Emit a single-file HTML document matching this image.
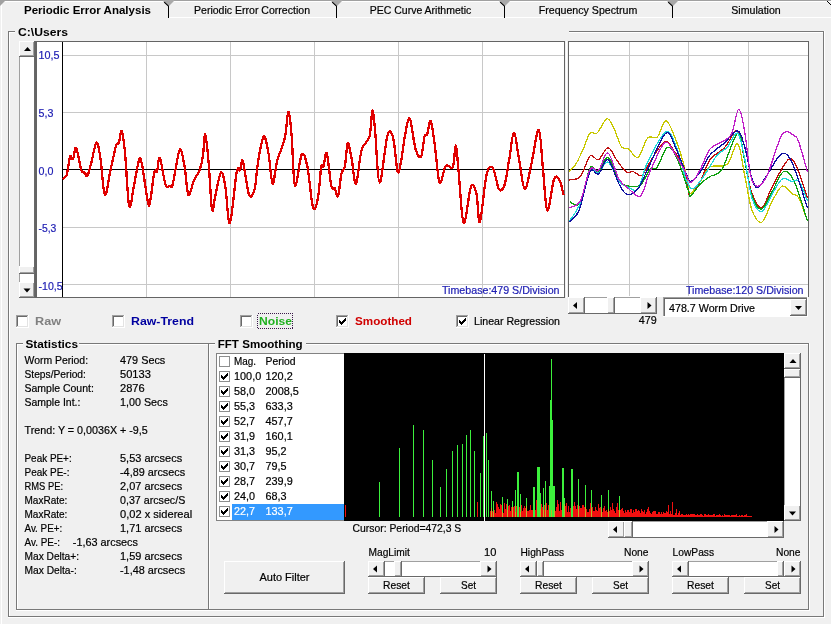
<!DOCTYPE html>
<html><head><meta charset="utf-8"><style>
html,body{margin:0;padding:0;background:#F0F0F0;width:831px;height:624px;overflow:hidden}
svg{display:block;will-change:transform}
text{font-family:"Liberation Sans",sans-serif;white-space:pre;stroke-width:0.2px}
</style></head><body>
<svg width="831" height="624" viewBox="0 0 831 624" shape-rendering="crispEdges">
<rect x="0" y="0" width="831" height="624" fill="#F0F0F0"/>
<rect x="0" y="0" width="831" height="1" fill="#A0A0A0"/>
<rect x="2" y="1" width="829" height="1" fill="#FFFFFF"/>
<rect x="1" y="2" width="1" height="622" fill="#FFFFFF"/>
<polygon points="0,0 6,0 0,6" fill="#A0A0A0" shape-rendering="geometricPrecision"/>
<rect x="169" y="17" width="662" height="1" fill="#FFFFFF"/>
<polygon points="163,0 174,0 174,1 169,6 168,6 163,1" fill="#A8A8A8" shape-rendering="geometricPrecision"/>
<line x1="164.2" y1="2.2" x2="168.5" y2="6.2" stroke="#000" stroke-width="1.1" shape-rendering="geometricPrecision"/>
<rect x="168" y="6" width="1" height="12" fill="#000"/>
<polygon points="331,0 342,0 342,1 337,6 336,6 331,1" fill="#A8A8A8" shape-rendering="geometricPrecision"/>
<line x1="332.2" y1="2.2" x2="336.5" y2="6.2" stroke="#000" stroke-width="1.1" shape-rendering="geometricPrecision"/>
<rect x="336" y="6" width="1" height="12" fill="#000"/>
<polygon points="499,0 510,0 510,1 505,6 504,6 499,1" fill="#A8A8A8" shape-rendering="geometricPrecision"/>
<line x1="500.2" y1="2.2" x2="504.5" y2="6.2" stroke="#000" stroke-width="1.1" shape-rendering="geometricPrecision"/>
<rect x="504" y="6" width="1" height="12" fill="#000"/>
<polygon points="667,0 678,0 678,1 673,6 672,6 667,1" fill="#A8A8A8" shape-rendering="geometricPrecision"/>
<line x1="668.2" y1="2.2" x2="672.5" y2="6.2" stroke="#000" stroke-width="1.1" shape-rendering="geometricPrecision"/>
<rect x="672" y="6" width="1" height="12" fill="#000"/>
<polyline points="827,1 831,5" stroke="#000" stroke-width="1" fill="none" shape-rendering="geometricPrecision"/>
<text x="24" y="14" font-size="11" font-weight="bold" fill="#000" text-anchor="start" textLength="127" lengthAdjust="spacingAndGlyphs">Periodic Error Analysis</text>
<text x="252" y="14" font-size="11" font-weight="normal" fill="#000" stroke="#000" text-anchor="middle" textLength="116" lengthAdjust="spacingAndGlyphs">Periodic Error Correction</text>
<text x="420.5" y="14" font-size="11" font-weight="normal" fill="#000" stroke="#000" text-anchor="middle" textLength="101.5" lengthAdjust="spacingAndGlyphs">PEC Curve Arithmetic</text>
<text x="588" y="14" font-size="11" font-weight="normal" fill="#000" stroke="#000" text-anchor="middle" textLength="98.5" lengthAdjust="spacingAndGlyphs">Frequency Spectrum</text>
<text x="756" y="14" font-size="11" font-weight="normal" fill="#000" stroke="#000" text-anchor="middle" textLength="49.5" lengthAdjust="spacingAndGlyphs">Simulation</text>
<rect x="8" y="31" width="816" height="1" fill="#787878"/>
<rect x="9" y="32" width="814" height="1" fill="#FFFFFF"/>
<rect x="8" y="31" width="1" height="586" fill="#787878"/>
<rect x="9" y="32" width="1" height="584" fill="#FFFFFF"/>
<rect x="823" y="31" width="1" height="586" fill="#787878"/>
<rect x="824" y="31" width="1" height="587" fill="#FFFFFF"/>
<rect x="8" y="616" width="816" height="1" fill="#787878"/>
<rect x="8" y="617" width="817" height="1" fill="#FFFFFF"/>
<rect x="15" y="30" width="554" height="3" fill="#F0F0F0"/>
<text x="18" y="36" font-size="11" font-weight="bold" fill="#000" text-anchor="start" textLength="50" lengthAdjust="spacingAndGlyphs">C:\Users</text>
<rect x="35" y="41" width="530" height="256" fill="#FFFFFF"/>
<rect x="35" y="41" width="530" height="1" fill="#646464"/>
<rect x="35" y="41" width="1" height="257" fill="#646464"/>
<rect x="36" y="41" width="1" height="257" fill="#646464"/>
<rect x="564" y="41" width="1" height="257" fill="#646464"/>
<rect x="35" y="297" width="530" height="1" fill="#646464"/>
<rect x="566" y="41" width="1" height="257" fill="#FFFFFF"/>
<rect x="146" y="42" width="1" height="255" fill="#C8C8C8"/>
<rect x="230" y="42" width="1" height="255" fill="#C8C8C8"/>
<rect x="314" y="42" width="1" height="255" fill="#C8C8C8"/>
<rect x="398" y="42" width="1" height="255" fill="#C8C8C8"/>
<rect x="482" y="42" width="1" height="255" fill="#C8C8C8"/>
<rect x="63" y="55" width="501" height="1" fill="#C8C8C8"/>
<rect x="63" y="112" width="501" height="1" fill="#C8C8C8"/>
<rect x="63" y="227" width="501" height="1" fill="#C8C8C8"/>
<rect x="63" y="284" width="501" height="1" fill="#C8C8C8"/>
<rect x="62" y="42" width="1" height="255" fill="#000"/>
<rect x="62" y="169" width="502" height="1" fill="#000"/>
<text x="38.5" y="59" font-size="11" font-weight="normal" fill="#2020B4" stroke="#2020B4" text-anchor="start" textLength="21.04" lengthAdjust="spacingAndGlyphs">10,5</text>
<text x="38.5" y="117" font-size="11" font-weight="normal" fill="#2020B4" stroke="#2020B4" text-anchor="start" textLength="14.86" lengthAdjust="spacingAndGlyphs">5,3</text>
<text x="38.5" y="174.5" font-size="11" font-weight="normal" fill="#2020B4" stroke="#2020B4" text-anchor="start" textLength="14.86" lengthAdjust="spacingAndGlyphs">0,0</text>
<text x="38.5" y="232" font-size="11" font-weight="normal" fill="#2020B4" stroke="#2020B4" text-anchor="start" textLength="17.87" lengthAdjust="spacingAndGlyphs">-5,3</text>
<text x="38.5" y="290" font-size="11" font-weight="normal" fill="#2020B4" stroke="#2020B4" text-anchor="start" textLength="24.04" lengthAdjust="spacingAndGlyphs">-10,5</text>
<text x="559.5" y="294" font-size="11" font-weight="normal" fill="#2020B4" stroke="#2020B4" text-anchor="end" textLength="117.5" lengthAdjust="spacingAndGlyphs">Timebase:479 S/Division</text>
<path d="M62.7,179.2 C63.4,178.4 65.5,178.4 66.7,174.7 C67.9,170.9 69.0,159.3 70.1,156.7 C71.1,154.1 72.0,160.5 73.0,159.0 C74.0,157.5 74.8,145.9 76.2,147.8 C77.6,149.7 79.9,166.1 81.3,170.2 C82.7,174.3 83.7,171.6 84.7,172.5 C85.7,173.4 86.3,177.5 87.4,175.8 C88.5,174.1 89.9,167.9 91.4,162.4 C92.9,156.9 94.9,143.3 96.4,142.6 C97.9,141.8 99.0,149.2 100.4,157.9 C101.8,166.6 103.2,192.9 104.9,194.9 C106.6,196.9 108.6,178.4 110.5,170.2 C112.4,162.0 114.7,150.0 116.1,145.5 C117.5,141.0 117.9,145.7 118.8,143.3 C119.7,140.9 120.7,129.2 121.7,130.9 C122.8,132.6 123.8,140.9 125.1,153.4 C126.3,165.9 127.7,200.9 129.2,206.1 C130.7,211.3 132.5,192.5 134.1,184.8 C135.7,177.1 137.7,163.5 139.0,160.1 C140.3,156.7 140.5,157.5 142.0,164.6 C143.5,171.7 146.6,196.8 148.0,202.8 C149.4,208.8 149.2,205.6 150.3,200.5 C151.4,195.4 153.2,177.4 154.3,172.5 C155.4,167.6 156.1,173.7 157.0,171.3 C157.9,168.9 158.5,155.7 159.9,157.9 C161.3,160.2 163.9,180.1 165.5,184.8 C167.1,189.5 168.5,185.7 169.6,185.9 C170.7,186.1 171.3,188.7 172.3,185.9 C173.3,183.1 174.3,175.3 175.6,169.1 C176.9,162.9 178.6,149.3 180.1,148.9 C181.6,148.5 183.2,159.1 184.6,166.8 C186.0,174.5 186.8,192.7 188.4,194.9 C190.0,197.2 192.1,184.4 194.0,180.3 C195.9,176.2 198.1,174.3 199.6,170.2 C201.1,166.1 202.1,161.6 203.0,155.6 C203.9,149.6 204.3,133.2 205.2,134.3 C206.1,135.4 207.5,149.9 208.6,162.4 C209.7,174.9 210.9,203.9 212.0,209.5 C213.1,215.1 213.8,202.2 215.3,196.0 C216.8,189.8 219.2,174.0 220.9,172.5 C222.6,171.0 223.9,178.6 225.4,187.0 C226.9,195.4 228.0,225.4 229.9,223.0 C231.8,220.6 234.9,181.3 236.6,172.5 C238.3,163.7 238.9,172.1 240.0,170.2 C241.1,168.3 241.4,157.1 242.9,161.2 C244.4,165.3 247.1,190.2 249.0,194.9 C250.9,199.6 253.1,194.7 254.6,189.3 C256.1,183.9 256.5,171.2 258.0,162.4 C259.5,153.6 261.9,138.0 263.6,136.5 C265.4,135.0 267.0,145.5 268.5,153.4 C270.0,161.3 271.2,182.4 272.6,183.7 C274.0,185.0 275.1,168.9 277.1,161.2 C279.2,153.5 283.0,145.9 284.9,137.7 C286.8,129.5 287.2,112.2 288.3,111.8 C289.4,111.4 290.5,123.1 291.6,135.4 C292.7,147.8 293.3,182.7 295.0,185.9 C296.7,189.1 299.6,157.7 301.7,154.5 C303.8,151.3 305.5,158.0 307.4,166.8 C309.3,175.6 311.2,202.1 313.0,207.3 C314.8,212.6 316.5,205.1 317.9,198.3 C319.3,191.6 320.3,172.1 321.2,166.8 C322.1,161.6 322.6,169.0 323.5,166.8 C324.4,164.6 325.5,150.2 326.8,153.4 C328.1,156.6 330.0,180.1 331.3,185.9 C332.6,191.7 333.6,186.5 334.7,188.2 C335.8,189.9 337.0,198.4 338.1,196.0 C339.2,193.6 340.3,178.5 341.4,173.6 C342.5,168.7 343.8,171.9 344.8,166.8 C345.9,161.8 346.6,144.8 347.7,143.3 C348.8,141.8 350.1,151.2 351.5,157.9 C352.9,164.6 354.3,185.0 356.0,183.7 C357.7,182.4 359.4,157.9 361.6,150.0 C363.9,142.1 367.7,143.1 369.5,136.5 C371.3,129.9 371.5,111.6 372.4,110.7 C373.3,109.8 373.9,118.9 375.1,130.9 C376.3,142.9 377.5,181.8 379.6,182.6 C381.7,183.3 385.2,142.9 387.5,135.4 C389.8,127.9 391.4,131.7 393.1,137.7 C394.8,143.7 396.3,167.2 397.6,171.3 C398.9,175.4 399.6,168.8 400.9,162.4 C402.2,156.1 403.9,140.5 405.4,133.2 C406.9,125.9 408.2,116.0 409.9,118.6 C411.6,121.2 413.6,142.6 415.5,148.9 C417.4,155.2 419.6,158.8 421.1,156.7 C422.6,154.6 423.5,140.2 424.5,136.5 C425.5,132.8 426.2,136.9 427.2,134.3 C428.2,131.7 429.4,119.3 430.6,120.8 C431.8,122.3 433.1,133.0 434.6,143.3 C436.1,153.6 437.8,178.7 439.5,182.6 C441.2,186.5 443.6,169.6 445.1,166.8 C446.6,164.0 447.2,165.7 448.5,165.7 C449.8,165.7 451.8,170.2 453.0,166.8 C454.2,163.4 455.0,144.8 455.9,145.5 C456.8,146.2 457.3,158.4 458.6,171.3 C459.9,184.2 461.6,220.4 463.7,223.0 C465.8,225.6 468.8,191.9 470.9,187.0 C473.0,182.1 475.0,188.0 476.5,193.8 C478.0,199.6 478.2,225.1 479.9,221.9 C481.6,218.7 484.4,183.7 486.6,174.7 C488.8,165.7 490.8,165.6 492.9,168.0 C495.0,170.4 497.1,186.5 499.0,189.3 C500.9,192.1 502.9,189.7 504.6,184.8 C506.3,179.9 507.5,168.7 509.1,160.1 C510.7,151.5 512.3,133.2 514.0,133.2 C515.7,133.2 517.4,150.8 519.2,160.1 C521.0,169.4 522.8,188.7 524.8,189.3 C526.8,189.9 529.2,173.4 531.5,163.5 C533.8,153.6 536.8,129.2 538.7,129.8 C540.6,130.4 541.4,153.3 542.8,166.8 C544.2,180.3 545.4,208.5 547.3,210.6 C549.2,212.7 552.0,184.2 554.0,179.2 C556.0,174.1 558.0,177.7 559.6,180.3 C561.2,182.9 562.9,192.5 563.5,194.9" fill="none" stroke="#E00000" stroke-width="2.3" stroke-linejoin="round" shape-rendering="crispEdges"/>
<rect x="19" y="41" width="16" height="257" fill="#FFFFFF"/>
<rect x="19" y="41" width="1" height="257" fill="#A0A0A0"/>
<rect x="34" y="41" width="1" height="257" fill="#696969"/>
<rect x="19" y="41" width="16" height="16" fill="#F0F0F0"/>
<rect x="19" y="41" width="16" height="1" fill="#FFFFFF"/>
<rect x="19" y="41" width="1" height="16" fill="#FFFFFF"/>
<rect x="19" y="56" width="16" height="1" fill="#696969"/>
<rect x="34" y="41" width="1" height="16" fill="#696969"/>
<rect x="20" y="55" width="14" height="1" fill="#A0A0A0"/>
<rect x="33" y="42" width="1" height="14" fill="#A0A0A0"/>
<polygon points="24.0,51 31.0,51 27.5,47" fill="#000" shape-rendering="geometricPrecision"/>
<rect x="19" y="282" width="16" height="16" fill="#F0F0F0"/>
<rect x="19" y="282" width="16" height="1" fill="#FFFFFF"/>
<rect x="19" y="282" width="1" height="16" fill="#FFFFFF"/>
<rect x="19" y="297" width="16" height="1" fill="#696969"/>
<rect x="34" y="282" width="1" height="16" fill="#696969"/>
<rect x="20" y="296" width="14" height="1" fill="#A0A0A0"/>
<rect x="33" y="283" width="1" height="14" fill="#A0A0A0"/>
<polygon points="23.5,288.5 30.5,288.5 27.0,292.5" fill="#000" shape-rendering="geometricPrecision"/>
<rect x="19" y="266" width="16" height="8" fill="#F0F0F0"/>
<rect x="19" y="266" width="16" height="1" fill="#FFFFFF"/>
<rect x="19" y="266" width="1" height="8" fill="#FFFFFF"/>
<rect x="19" y="273" width="16" height="1" fill="#696969"/>
<rect x="34" y="266" width="1" height="8" fill="#696969"/>
<rect x="20" y="272" width="14" height="1" fill="#A0A0A0"/>
<rect x="33" y="267" width="1" height="6" fill="#A0A0A0"/>
<rect x="568" y="41" width="241" height="256" fill="#FFFFFF"/>
<rect x="568" y="41" width="241" height="1" fill="#646464"/>
<rect x="568" y="41" width="1" height="256" fill="#646464"/>
<rect x="808" y="41" width="1" height="256" fill="#646464"/>
<rect x="629" y="42" width="1" height="254" fill="#C8C8C8"/>
<rect x="688" y="42" width="1" height="254" fill="#C8C8C8"/>
<rect x="748" y="42" width="1" height="254" fill="#C8C8C8"/>
<rect x="569" y="55" width="239" height="1" fill="#C8C8C8"/>
<rect x="569" y="112" width="239" height="1" fill="#C8C8C8"/>
<rect x="569" y="227" width="239" height="1" fill="#C8C8C8"/>
<rect x="569" y="284" width="239" height="1" fill="#C8C8C8"/>
<rect x="569" y="169" width="239" height="1" fill="#000"/>
<text x="803.5" y="294" font-size="11" font-weight="normal" fill="#2020B4" stroke="#2020B4" text-anchor="end" textLength="117.5" lengthAdjust="spacingAndGlyphs">Timebase:120 S/Division</text>
<path d="M568.9,171.7 C570.0,170.5 573.3,168.1 575.6,164.5 C577.9,160.9 580.4,155.2 582.8,150.0 C585.2,144.8 587.6,136.2 590.0,133.3 C592.4,130.4 594.5,135.2 597.3,132.8 C600.1,130.4 604.1,119.5 606.9,118.8 C609.7,118.1 611.6,123.9 614.0,128.5 C616.4,133.1 618.9,143.1 621.3,146.5 C623.7,149.9 625.7,147.1 628.5,148.9 C631.3,150.7 634.8,159.1 638.0,157.3 C641.2,155.5 644.5,141.4 647.7,138.0 C650.9,134.6 654.3,139.8 657.3,136.9 C660.3,134.0 663.0,121.0 665.8,120.8 C668.6,120.6 671.2,128.4 674.2,135.7 C677.2,143.0 681.4,155.7 683.8,164.5 C686.2,173.3 687.2,183.8 688.4,188.6 C689.6,193.4 688.8,194.6 690.8,193.4 C692.8,192.2 697.2,185.7 700.4,181.3 C703.6,176.9 705.6,169.8 710.0,167.0 C714.4,164.2 722.3,168.3 726.9,164.5 C731.5,160.7 734.7,142.0 737.7,144.0 C740.7,146.0 742.5,165.5 744.9,176.5 C747.3,187.5 749.2,202.6 752.0,210.2 C754.8,217.8 758.3,223.8 761.7,222.2 C765.1,220.6 769.1,206.6 772.5,200.6 C775.9,194.6 779.0,187.4 782.2,186.2 C785.4,185.0 789.0,191.4 791.8,193.4 C794.6,195.4 796.4,193.6 799.0,198.2 C801.6,202.8 806.0,217.2 807.4,221.0" fill="none" stroke="#C8C800" stroke-width="1.3" shape-rendering="crispEdges"/>
<path d="M569,180 C570.9,179.4 576.9,180.5 580.4,176.5 C583.9,172.5 587.0,158.8 590.0,156.0 C593.0,153.2 595.5,161.1 598.5,159.7 C601.5,158.3 605.0,147.7 608.0,147.7 C611.0,147.7 613.5,155.7 616.5,159.7 C619.5,163.7 623.2,169.7 626.0,171.7 C628.8,173.7 630.7,171.1 633.3,171.7 C635.9,172.3 638.9,176.9 641.7,175.3 C644.5,173.7 646.2,167.6 650.0,162.0 C653.8,156.4 660.6,143.5 664.6,141.7 C668.6,139.9 671.0,147.1 674.2,151.3 C677.4,155.5 681.4,160.4 683.8,167.0 C686.2,173.6 687.2,186.2 688.4,191.0 C689.6,195.8 688.8,197.4 690.8,195.8 C692.8,194.2 697.2,187.3 700.4,181.3 C703.6,175.3 706.0,165.3 710.0,159.7 C714.0,154.1 719.9,152.5 724.5,147.7 C729.1,142.9 734.3,128.5 737.7,130.9 C741.1,133.3 742.5,151.6 744.9,162.0 C747.3,172.4 749.2,185.8 752.0,193.4 C754.8,201.0 758.3,209.0 761.7,207.8 C765.1,206.6 768.1,194.2 772.5,186.2 C776.9,178.2 784.2,162.9 788.2,159.7 C792.2,156.5 793.4,160.6 796.6,167.0 C799.8,173.4 805.6,193.0 807.4,198.2" fill="none" stroke="#C01010" stroke-width="1.3" shape-rendering="crispEdges"/>
<path d="M569.6,201.8 C571.4,202.0 577.0,208.6 580.4,203.0 C583.8,197.4 587.0,173.2 590.0,168.0 C593.0,162.8 595.5,173.5 598.5,171.7 C601.5,169.9 604.6,155.9 608.0,157.3 C611.4,158.7 615.5,175.2 618.9,180.0 C622.3,184.8 624.9,185.2 628.5,186.0 C632.1,186.8 636.9,187.8 640.5,185.0 C644.1,182.2 647.2,172.3 650.0,169.3 C652.8,166.3 654.5,170.6 657.3,167.0 C660.1,163.4 663.8,149.3 667.0,147.7 C670.2,146.1 673.0,150.1 676.6,157.3 C680.2,164.5 686.0,184.6 688.4,191.0 C690.8,197.4 688.8,197.0 690.8,195.8 C692.8,194.6 697.2,187.0 700.4,183.8 C703.6,180.6 706.4,178.9 710.0,176.5 C713.6,174.1 717.4,176.5 722.0,169.3 C726.6,162.1 733.9,134.5 737.7,133.3 C741.5,132.1 742.5,151.6 744.9,162.0 C747.3,172.4 749.2,188.0 752.0,195.8 C754.8,203.6 758.3,209.8 761.7,209.0 C765.1,208.2 768.9,197.2 772.5,191.0 C776.1,184.8 779.8,173.3 783.4,171.7 C787.0,170.1 790.2,173.1 794.2,181.3 C798.2,189.5 805.2,214.4 807.4,221.0" fill="none" stroke="#10A010" stroke-width="1.3" shape-rendering="crispEdges"/>
<path d="M569.6,221 C571.4,218.0 577.0,211.4 580.4,203.0 C583.8,194.6 587.0,175.5 590.0,170.5 C593.0,165.5 595.5,174.4 598.5,173.0 C601.5,171.6 604.6,160.6 608.0,162.0 C611.4,163.4 615.5,177.1 618.9,181.3 C622.3,185.5 625.3,186.2 628.5,187.4 C631.7,188.6 634.8,192.8 638.0,188.6 C641.2,184.4 643.1,171.4 647.7,162.0 C652.3,152.6 661.0,134.4 665.8,132.0 C670.6,129.6 673.2,139.9 676.6,147.7 C680.0,155.5 683.2,172.2 686.0,179.0 C688.8,185.8 690.0,189.4 693.2,188.6 C696.4,187.8 701.2,179.6 705.2,174.0 C709.2,168.4 713.6,159.4 717.2,155.0 C720.8,150.6 723.5,151.3 726.9,147.7 C730.3,144.1 734.7,131.3 737.7,133.3 C740.7,135.3 742.5,148.9 744.9,159.7 C747.3,170.5 749.2,189.6 752.0,198.2 C754.8,206.8 758.3,212.2 761.7,211.4 C765.1,210.6 769.1,198.8 772.5,193.4 C775.9,188.0 779.0,181.0 782.2,179.0 C785.4,177.0 789.0,180.9 791.8,181.3 C794.6,181.7 796.4,178.1 799.0,181.3 C801.6,184.5 806.0,197.4 807.4,200.6" fill="none" stroke="#20D8D8" stroke-width="1.3" shape-rendering="crispEdges"/>
<path d="M569.6,222.2 C571.2,220.2 575.8,218.4 579.2,210.0 C582.6,201.6 586.8,177.7 590.0,171.7 C593.2,165.7 595.5,176.0 598.5,174.0 C601.5,172.0 604.6,158.1 608.0,159.7 C611.4,161.3 615.7,178.0 618.9,183.8 C622.1,189.6 624.1,193.8 627.3,194.6 C630.5,195.4 634.6,192.8 638.0,188.6 C641.4,184.4 643.1,178.5 647.7,169.3 C652.3,160.1 661.0,136.5 665.8,133.3 C670.6,130.1 673.2,143.2 676.6,150.0 C680.0,156.8 683.8,168.8 686.2,174.0 C688.6,179.2 688.4,181.7 690.8,181.3 C693.2,180.9 697.2,176.1 700.4,171.7 C703.6,167.3 706.0,159.8 710.0,155.0 C714.0,150.2 719.9,146.9 724.5,142.9 C729.1,138.9 734.3,130.1 737.7,130.9 C741.1,131.7 742.5,139.7 744.9,147.7 C747.3,155.7 749.8,172.4 752.0,179.0 C754.2,185.6 755.5,188.2 758.1,187.4 C760.7,186.6 763.9,179.5 767.7,174.0 C771.5,168.5 777.0,156.4 781.0,154.4 C785.0,152.4 787.4,153.1 791.8,162.0 C796.2,170.9 804.8,200.2 807.4,207.8" fill="none" stroke="#1010A0" stroke-width="1.3" shape-rendering="crispEdges"/>
<path d="M569.6,207.8 C571.4,206.6 577.0,207.0 580.4,200.6 C583.8,194.2 587.0,174.3 590.0,169.3 C593.0,164.3 595.5,173.2 598.5,170.5 C601.5,167.8 604.6,151.6 608.0,153.0 C611.4,154.4 615.5,173.1 618.9,179.0 C622.3,184.9 624.9,185.8 628.5,188.6 C632.1,191.4 636.9,198.6 640.5,195.8 C644.1,193.0 646.0,180.5 650.0,171.7 C654.0,162.9 660.6,146.1 664.6,142.9 C668.6,139.7 671.0,148.1 674.2,152.5 C677.4,156.9 681.0,164.3 683.8,169.3 C686.6,174.3 688.0,182.5 690.8,182.5 C693.6,182.5 697.2,174.9 700.4,169.3 C703.6,163.7 706.0,153.8 710.0,149.0 C714.0,144.2 720.9,143.1 724.5,140.5 C728.1,137.9 729.3,138.5 731.7,133.3 C734.1,128.1 736.7,109.2 738.9,109.2 C741.1,109.2 742.9,122.1 744.9,133.3 C746.9,144.5 748.7,167.7 750.9,176.5 C753.1,185.3 755.3,186.6 758.1,186.2 C760.9,185.8 763.7,182.6 767.7,174.0 C771.7,165.4 777.8,140.9 782.2,134.5 C786.6,128.1 791.4,134.3 794.2,135.7 C797.0,137.1 796.8,136.9 799.0,142.9 C801.2,148.9 806.0,166.9 807.4,171.7" fill="none" stroke="#C020C8" stroke-width="1.3" shape-rendering="crispEdges"/>
<rect x="568" y="297" width="89" height="17" fill="#FFFFFF"/>
<rect x="568" y="297" width="89" height="1" fill="#A0A0A0"/>
<rect x="568" y="313" width="89" height="1" fill="#696969"/>
<rect x="568" y="297" width="17" height="17" fill="#F0F0F0"/>
<rect x="568" y="297" width="17" height="1" fill="#FFFFFF"/>
<rect x="568" y="297" width="1" height="17" fill="#FFFFFF"/>
<rect x="568" y="313" width="17" height="1" fill="#696969"/>
<rect x="584" y="297" width="1" height="17" fill="#696969"/>
<rect x="569" y="312" width="15" height="1" fill="#A0A0A0"/>
<rect x="583" y="298" width="1" height="15" fill="#A0A0A0"/>
<polygon points="577,302.1 577,309.1 573,305.6" fill="#000" shape-rendering="geometricPrecision"/>
<rect x="640" y="297" width="17" height="17" fill="#F0F0F0"/>
<rect x="640" y="297" width="17" height="1" fill="#FFFFFF"/>
<rect x="640" y="297" width="1" height="17" fill="#FFFFFF"/>
<rect x="640" y="313" width="17" height="1" fill="#696969"/>
<rect x="656" y="297" width="1" height="17" fill="#696969"/>
<rect x="641" y="312" width="15" height="1" fill="#A0A0A0"/>
<rect x="655" y="298" width="1" height="15" fill="#A0A0A0"/>
<polygon points="647.5,302.1 647.5,309.1 651.5,305.6" fill="#000" shape-rendering="geometricPrecision"/>
<rect x="607" y="297" width="8" height="17" fill="#F0F0F0"/>
<rect x="607" y="297" width="8" height="1" fill="#FFFFFF"/>
<rect x="607" y="297" width="1" height="17" fill="#FFFFFF"/>
<rect x="607" y="313" width="8" height="1" fill="#696969"/>
<rect x="614" y="297" width="1" height="17" fill="#696969"/>
<rect x="608" y="312" width="6" height="1" fill="#A0A0A0"/>
<rect x="613" y="298" width="1" height="15" fill="#A0A0A0"/>
<text x="656.7" y="324" font-size="11" font-weight="normal" fill="#000" stroke="#000" text-anchor="end" textLength="18" lengthAdjust="spacingAndGlyphs">479</text>
<rect x="663" y="297" width="145" height="20" fill="#FFFFFF"/>
<rect x="663" y="297" width="145" height="1" fill="#A0A0A0"/>
<rect x="663" y="297" width="1" height="20" fill="#A0A0A0"/>
<rect x="664" y="298" width="143" height="1" fill="#696969"/>
<rect x="664" y="298" width="1" height="18" fill="#696969"/>
<rect x="663" y="316" width="145" height="1" fill="#FFFFFF"/>
<rect x="807" y="297" width="1" height="20" fill="#FFFFFF"/>
<rect x="790" y="299" width="17" height="17" fill="#F0F0F0"/>
<rect x="790" y="299" width="17" height="1" fill="#FFFFFF"/>
<rect x="790" y="299" width="1" height="17" fill="#FFFFFF"/>
<rect x="790" y="315" width="17" height="1" fill="#696969"/>
<rect x="806" y="299" width="1" height="17" fill="#696969"/>
<rect x="791" y="314" width="15" height="1" fill="#A0A0A0"/>
<rect x="805" y="300" width="1" height="15" fill="#A0A0A0"/>
<polygon points="795,306 802,306 798.5,310" fill="#000" shape-rendering="geometricPrecision"/>
<text x="669" y="312" font-size="11" font-weight="normal" fill="#000" stroke="#000" text-anchor="start" textLength="86" lengthAdjust="spacingAndGlyphs">478.7 Worm Drive</text>
<rect x="16" y="315" width="13" height="13" fill="#FFFFFF"/>
<rect x="16" y="315" width="13" height="1" fill="#A0A0A0"/>
<rect x="16" y="315" width="1" height="13" fill="#A0A0A0"/>
<rect x="17" y="316" width="11" height="1" fill="#696969"/>
<rect x="17" y="316" width="1" height="11" fill="#696969"/>
<rect x="16" y="327" width="13" height="1" fill="#FFFFFF"/>
<rect x="28" y="315" width="1" height="13" fill="#FFFFFF"/>
<rect x="17" y="326" width="11" height="1" fill="#E3E3E3"/>
<rect x="27" y="316" width="1" height="11" fill="#E3E3E3"/>
<text x="35" y="325" font-size="11" font-weight="bold" fill="#808080" text-anchor="start" textLength="26" lengthAdjust="spacingAndGlyphs">Raw</text>
<rect x="112" y="315" width="13" height="13" fill="#FFFFFF"/>
<rect x="112" y="315" width="13" height="1" fill="#A0A0A0"/>
<rect x="112" y="315" width="1" height="13" fill="#A0A0A0"/>
<rect x="113" y="316" width="11" height="1" fill="#696969"/>
<rect x="113" y="316" width="1" height="11" fill="#696969"/>
<rect x="112" y="327" width="13" height="1" fill="#FFFFFF"/>
<rect x="124" y="315" width="1" height="13" fill="#FFFFFF"/>
<rect x="113" y="326" width="11" height="1" fill="#E3E3E3"/>
<rect x="123" y="316" width="1" height="11" fill="#E3E3E3"/>
<text x="131" y="325" font-size="11" font-weight="bold" fill="#0000A0" text-anchor="start" textLength="63" lengthAdjust="spacingAndGlyphs">Raw-Trend</text>
<rect x="240" y="315" width="13" height="13" fill="#FFFFFF"/>
<rect x="240" y="315" width="13" height="1" fill="#A0A0A0"/>
<rect x="240" y="315" width="1" height="13" fill="#A0A0A0"/>
<rect x="241" y="316" width="11" height="1" fill="#696969"/>
<rect x="241" y="316" width="1" height="11" fill="#696969"/>
<rect x="240" y="327" width="13" height="1" fill="#FFFFFF"/>
<rect x="252" y="315" width="1" height="13" fill="#FFFFFF"/>
<rect x="241" y="326" width="11" height="1" fill="#E3E3E3"/>
<rect x="251" y="316" width="1" height="11" fill="#E3E3E3"/>
<rect x="257.5" y="313.5" width="35" height="15" fill="none" stroke="#3A1A4A" stroke-width="1" stroke-dasharray="1,1"/>
<text x="259" y="325" font-size="11" font-weight="bold" fill="#20B020" text-anchor="start" textLength="33" lengthAdjust="spacingAndGlyphs">Noise</text>
<rect x="336" y="315" width="13" height="13" fill="#FFFFFF"/>
<rect x="336" y="315" width="13" height="1" fill="#A0A0A0"/>
<rect x="336" y="315" width="1" height="13" fill="#A0A0A0"/>
<rect x="337" y="316" width="11" height="1" fill="#696969"/>
<rect x="337" y="316" width="1" height="11" fill="#696969"/>
<rect x="336" y="327" width="13" height="1" fill="#FFFFFF"/>
<rect x="348" y="315" width="1" height="13" fill="#FFFFFF"/>
<rect x="337" y="326" width="11" height="1" fill="#E3E3E3"/>
<rect x="347" y="316" width="1" height="11" fill="#E3E3E3"/>
<rect x="345" y="318" width="1" height="1" fill="#000"/>
<rect x="344" y="319" width="1" height="1" fill="#000"/>
<rect x="345" y="319" width="1" height="1" fill="#000"/>
<rect x="339" y="320" width="1" height="1" fill="#000"/>
<rect x="343" y="320" width="1" height="1" fill="#000"/>
<rect x="344" y="320" width="1" height="1" fill="#000"/>
<rect x="345" y="320" width="1" height="1" fill="#000"/>
<rect x="339" y="321" width="1" height="1" fill="#000"/>
<rect x="340" y="321" width="1" height="1" fill="#000"/>
<rect x="342" y="321" width="1" height="1" fill="#000"/>
<rect x="343" y="321" width="1" height="1" fill="#000"/>
<rect x="344" y="321" width="1" height="1" fill="#000"/>
<rect x="339" y="322" width="1" height="1" fill="#000"/>
<rect x="340" y="322" width="1" height="1" fill="#000"/>
<rect x="341" y="322" width="1" height="1" fill="#000"/>
<rect x="342" y="322" width="1" height="1" fill="#000"/>
<rect x="343" y="322" width="1" height="1" fill="#000"/>
<rect x="340" y="323" width="1" height="1" fill="#000"/>
<rect x="341" y="323" width="1" height="1" fill="#000"/>
<rect x="342" y="323" width="1" height="1" fill="#000"/>
<rect x="341" y="324" width="1" height="1" fill="#000"/>
<text x="355" y="325" font-size="11" font-weight="bold" fill="#D00000" text-anchor="start" textLength="57" lengthAdjust="spacingAndGlyphs">Smoothed</text>
<rect x="456" y="315" width="13" height="13" fill="#FFFFFF"/>
<rect x="456" y="315" width="13" height="1" fill="#A0A0A0"/>
<rect x="456" y="315" width="1" height="13" fill="#A0A0A0"/>
<rect x="457" y="316" width="11" height="1" fill="#696969"/>
<rect x="457" y="316" width="1" height="11" fill="#696969"/>
<rect x="456" y="327" width="13" height="1" fill="#FFFFFF"/>
<rect x="468" y="315" width="1" height="13" fill="#FFFFFF"/>
<rect x="457" y="326" width="11" height="1" fill="#E3E3E3"/>
<rect x="467" y="316" width="1" height="11" fill="#E3E3E3"/>
<rect x="465" y="318" width="1" height="1" fill="#000"/>
<rect x="464" y="319" width="1" height="1" fill="#000"/>
<rect x="465" y="319" width="1" height="1" fill="#000"/>
<rect x="459" y="320" width="1" height="1" fill="#000"/>
<rect x="463" y="320" width="1" height="1" fill="#000"/>
<rect x="464" y="320" width="1" height="1" fill="#000"/>
<rect x="465" y="320" width="1" height="1" fill="#000"/>
<rect x="459" y="321" width="1" height="1" fill="#000"/>
<rect x="460" y="321" width="1" height="1" fill="#000"/>
<rect x="462" y="321" width="1" height="1" fill="#000"/>
<rect x="463" y="321" width="1" height="1" fill="#000"/>
<rect x="464" y="321" width="1" height="1" fill="#000"/>
<rect x="459" y="322" width="1" height="1" fill="#000"/>
<rect x="460" y="322" width="1" height="1" fill="#000"/>
<rect x="461" y="322" width="1" height="1" fill="#000"/>
<rect x="462" y="322" width="1" height="1" fill="#000"/>
<rect x="463" y="322" width="1" height="1" fill="#000"/>
<rect x="460" y="323" width="1" height="1" fill="#000"/>
<rect x="461" y="323" width="1" height="1" fill="#000"/>
<rect x="462" y="323" width="1" height="1" fill="#000"/>
<rect x="461" y="324" width="1" height="1" fill="#000"/>
<text x="474" y="325" font-size="11" font-weight="normal" fill="#000" stroke="#000" text-anchor="start" textLength="86" lengthAdjust="spacingAndGlyphs">Linear Regression</text>
<rect x="16" y="343" width="193" height="1" fill="#787878"/>
<rect x="17" y="344" width="191" height="1" fill="#FFFFFF"/>
<rect x="16" y="343" width="1" height="267" fill="#787878"/>
<rect x="17" y="344" width="1" height="265" fill="#FFFFFF"/>
<rect x="208" y="343" width="1" height="267" fill="#787878"/>
<rect x="209" y="343" width="1" height="268" fill="#FFFFFF"/>
<rect x="16" y="609" width="193" height="1" fill="#787878"/>
<rect x="16" y="610" width="194" height="1" fill="#FFFFFF"/>
<rect x="23" y="342" width="56" height="3" fill="#F0F0F0"/>
<text x="25.5" y="348" font-size="11" font-weight="bold" fill="#000" text-anchor="start" textLength="52.5" lengthAdjust="spacingAndGlyphs">Statistics</text>
<text x="24.5" y="364" font-size="11" font-weight="normal" fill="#000" stroke="#000" text-anchor="start" textLength="63.54" lengthAdjust="spacingAndGlyphs">Worm Period:</text>
<text x="120" y="364" font-size="11" font-weight="normal" fill="#000" stroke="#000" text-anchor="start" textLength="45.3" lengthAdjust="spacingAndGlyphs">479 Secs</text>
<text x="24.5" y="378" font-size="11" font-weight="normal" fill="#000" stroke="#000" text-anchor="start" textLength="61.39" lengthAdjust="spacingAndGlyphs">Steps/Period:</text>
<text x="120" y="378" font-size="11" font-weight="normal" fill="#000" stroke="#000" text-anchor="start" textLength="30.89" lengthAdjust="spacingAndGlyphs">50133</text>
<text x="24.5" y="392" font-size="11" font-weight="normal" fill="#000" stroke="#000" text-anchor="start" textLength="69.35" lengthAdjust="spacingAndGlyphs">Sample Count:</text>
<text x="120" y="392" font-size="11" font-weight="normal" fill="#000" stroke="#000" text-anchor="start" textLength="24.71" lengthAdjust="spacingAndGlyphs">2876</text>
<text x="24.5" y="406" font-size="11" font-weight="normal" fill="#000" stroke="#000" text-anchor="start" textLength="55.86" lengthAdjust="spacingAndGlyphs">Sample Int.:</text>
<text x="120" y="406" font-size="11" font-weight="normal" fill="#000" stroke="#000" text-anchor="start" textLength="47.81" lengthAdjust="spacingAndGlyphs">1,00 Secs</text>
<text x="24.5" y="434" font-size="11" font-weight="normal" fill="#000" stroke="#000" text-anchor="start" textLength="123.29" lengthAdjust="spacingAndGlyphs">Trend: Y = 0,0036X + -9,5</text>
<text x="24.5" y="462" font-size="11" font-weight="normal" fill="#000" stroke="#000" text-anchor="start" textLength="47.18" lengthAdjust="spacingAndGlyphs">Peak PE+:</text>
<text x="120" y="462" font-size="11" font-weight="normal" fill="#000" stroke="#000" text-anchor="start" textLength="62.15" lengthAdjust="spacingAndGlyphs">5,53 arcsecs</text>
<text x="24.5" y="476" font-size="11" font-weight="normal" fill="#000" stroke="#000" text-anchor="start" textLength="44.91" lengthAdjust="spacingAndGlyphs">Peak PE-:</text>
<text x="120" y="476" font-size="11" font-weight="normal" fill="#000" stroke="#000" text-anchor="start" textLength="65.16" lengthAdjust="spacingAndGlyphs">-4,89 arcsecs</text>
<text x="24.5" y="490" font-size="11" font-weight="normal" fill="#000" stroke="#000" text-anchor="start" textLength="38.56" lengthAdjust="spacingAndGlyphs">RMS PE:</text>
<text x="120" y="490" font-size="11" font-weight="normal" fill="#000" stroke="#000" text-anchor="start" textLength="62.15" lengthAdjust="spacingAndGlyphs">2,07 arcsecs</text>
<text x="24.5" y="504" font-size="11" font-weight="normal" fill="#000" stroke="#000" text-anchor="start" textLength="42.9" lengthAdjust="spacingAndGlyphs">MaxRate:</text>
<text x="120" y="504" font-size="11" font-weight="normal" fill="#000" stroke="#000" text-anchor="start" textLength="65.29" lengthAdjust="spacingAndGlyphs">0,37 arcsec/S</text>
<text x="24.5" y="518" font-size="11" font-weight="normal" fill="#000" stroke="#000" text-anchor="start" textLength="42.9" lengthAdjust="spacingAndGlyphs">MaxRate:</text>
<text x="120" y="518" font-size="11" font-weight="normal" fill="#000" stroke="#000" text-anchor="start" textLength="72.13" lengthAdjust="spacingAndGlyphs">0,02 x sidereal</text>
<text x="24.5" y="532" font-size="11" font-weight="normal" fill="#000" stroke="#000" text-anchor="start" textLength="37.69" lengthAdjust="spacingAndGlyphs">Av. PE+:</text>
<text x="120" y="532" font-size="11" font-weight="normal" fill="#000" stroke="#000" text-anchor="start" textLength="62.15" lengthAdjust="spacingAndGlyphs">1,71 arcsecs</text>
<text x="24.5" y="546" font-size="11" font-weight="normal" fill="#000" stroke="#000" text-anchor="start" textLength="35.43" lengthAdjust="spacingAndGlyphs">Av. PE-:</text>
<text x="24.5" y="560" font-size="11" font-weight="normal" fill="#000" stroke="#000" text-anchor="start" textLength="54.54" lengthAdjust="spacingAndGlyphs">Max Delta+:</text>
<text x="120" y="560" font-size="11" font-weight="normal" fill="#000" stroke="#000" text-anchor="start" textLength="62.15" lengthAdjust="spacingAndGlyphs">1,59 arcsecs</text>
<text x="24.5" y="574" font-size="11" font-weight="normal" fill="#000" stroke="#000" text-anchor="start" textLength="52.27" lengthAdjust="spacingAndGlyphs">Max Delta-:</text>
<text x="120" y="574" font-size="11" font-weight="normal" fill="#000" stroke="#000" text-anchor="start" textLength="65.16" lengthAdjust="spacingAndGlyphs">-1,48 arcsecs</text>
<text x="72.8" y="546" font-size="11" font-weight="normal" fill="#000" stroke="#000" text-anchor="start" textLength="65.16" lengthAdjust="spacingAndGlyphs">-1,63 arcsecs</text>
<rect x="208" y="343" width="601" height="1" fill="#787878"/>
<rect x="209" y="344" width="599" height="1" fill="#FFFFFF"/>
<rect x="208" y="343" width="1" height="267" fill="#787878"/>
<rect x="209" y="344" width="1" height="265" fill="#FFFFFF"/>
<rect x="808" y="343" width="1" height="267" fill="#787878"/>
<rect x="809" y="343" width="1" height="268" fill="#FFFFFF"/>
<rect x="208" y="609" width="601" height="1" fill="#787878"/>
<rect x="208" y="610" width="602" height="1" fill="#FFFFFF"/>
<rect x="215" y="342" width="91" height="3" fill="#F0F0F0"/>
<text x="217.7" y="348" font-size="11" font-weight="bold" fill="#000" text-anchor="start" textLength="85" lengthAdjust="spacingAndGlyphs">FFT Smoothing</text>
<rect x="216" y="353" width="128" height="168" fill="#FFFFFF"/>
<rect x="216" y="353" width="128" height="1" fill="#828282"/>
<rect x="216" y="353" width="1" height="168" fill="#828282"/>
<rect x="216" y="520" width="128" height="1" fill="#828282"/>
<rect x="219" y="356" width="11" height="11" fill="#FFFFFF"/>
<rect x="219.5" y="356.5" width="10" height="10" fill="none" stroke="#8E8F8F"/>
<text x="234" y="365" font-size="11" font-weight="normal" fill="#000" stroke="#000" text-anchor="start" textLength="22.01" lengthAdjust="spacingAndGlyphs">Mag.</text>
<text x="265.5" y="365" font-size="11" font-weight="normal" fill="#000" stroke="#000" text-anchor="start" textLength="29.99" lengthAdjust="spacingAndGlyphs">Period</text>
<rect x="219" y="371" width="11" height="11" fill="#FFFFFF"/>
<rect x="219.5" y="371.5" width="10" height="10" fill="none" stroke="#8E8F8F"/>
<rect x="227" y="373" width="1" height="1" fill="#000"/>
<rect x="226" y="374" width="1" height="1" fill="#000"/>
<rect x="227" y="374" width="1" height="1" fill="#000"/>
<rect x="221" y="375" width="1" height="1" fill="#000"/>
<rect x="225" y="375" width="1" height="1" fill="#000"/>
<rect x="226" y="375" width="1" height="1" fill="#000"/>
<rect x="227" y="375" width="1" height="1" fill="#000"/>
<rect x="221" y="376" width="1" height="1" fill="#000"/>
<rect x="222" y="376" width="1" height="1" fill="#000"/>
<rect x="224" y="376" width="1" height="1" fill="#000"/>
<rect x="225" y="376" width="1" height="1" fill="#000"/>
<rect x="226" y="376" width="1" height="1" fill="#000"/>
<rect x="221" y="377" width="1" height="1" fill="#000"/>
<rect x="222" y="377" width="1" height="1" fill="#000"/>
<rect x="223" y="377" width="1" height="1" fill="#000"/>
<rect x="224" y="377" width="1" height="1" fill="#000"/>
<rect x="225" y="377" width="1" height="1" fill="#000"/>
<rect x="222" y="378" width="1" height="1" fill="#000"/>
<rect x="223" y="378" width="1" height="1" fill="#000"/>
<rect x="224" y="378" width="1" height="1" fill="#000"/>
<rect x="223" y="379" width="1" height="1" fill="#000"/>
<text x="234" y="380" font-size="11" font-weight="normal" fill="#000" stroke="#000" text-anchor="start" textLength="27.22" lengthAdjust="spacingAndGlyphs">100,0</text>
<text x="265.5" y="380" font-size="11" font-weight="normal" fill="#000" stroke="#000" text-anchor="start" textLength="27.22" lengthAdjust="spacingAndGlyphs">120,2</text>
<rect x="219" y="386" width="11" height="11" fill="#FFFFFF"/>
<rect x="219.5" y="386.5" width="10" height="10" fill="none" stroke="#8E8F8F"/>
<rect x="227" y="388" width="1" height="1" fill="#000"/>
<rect x="226" y="389" width="1" height="1" fill="#000"/>
<rect x="227" y="389" width="1" height="1" fill="#000"/>
<rect x="221" y="390" width="1" height="1" fill="#000"/>
<rect x="225" y="390" width="1" height="1" fill="#000"/>
<rect x="226" y="390" width="1" height="1" fill="#000"/>
<rect x="227" y="390" width="1" height="1" fill="#000"/>
<rect x="221" y="391" width="1" height="1" fill="#000"/>
<rect x="222" y="391" width="1" height="1" fill="#000"/>
<rect x="224" y="391" width="1" height="1" fill="#000"/>
<rect x="225" y="391" width="1" height="1" fill="#000"/>
<rect x="226" y="391" width="1" height="1" fill="#000"/>
<rect x="221" y="392" width="1" height="1" fill="#000"/>
<rect x="222" y="392" width="1" height="1" fill="#000"/>
<rect x="223" y="392" width="1" height="1" fill="#000"/>
<rect x="224" y="392" width="1" height="1" fill="#000"/>
<rect x="225" y="392" width="1" height="1" fill="#000"/>
<rect x="222" y="393" width="1" height="1" fill="#000"/>
<rect x="223" y="393" width="1" height="1" fill="#000"/>
<rect x="224" y="393" width="1" height="1" fill="#000"/>
<rect x="223" y="394" width="1" height="1" fill="#000"/>
<text x="234" y="395" font-size="11" font-weight="normal" fill="#000" stroke="#000" text-anchor="start" textLength="21.04" lengthAdjust="spacingAndGlyphs">58,0</text>
<text x="265.5" y="395" font-size="11" font-weight="normal" fill="#000" stroke="#000" text-anchor="start" textLength="33.4" lengthAdjust="spacingAndGlyphs">2008,5</text>
<rect x="219" y="401" width="11" height="11" fill="#FFFFFF"/>
<rect x="219.5" y="401.5" width="10" height="10" fill="none" stroke="#8E8F8F"/>
<rect x="227" y="403" width="1" height="1" fill="#000"/>
<rect x="226" y="404" width="1" height="1" fill="#000"/>
<rect x="227" y="404" width="1" height="1" fill="#000"/>
<rect x="221" y="405" width="1" height="1" fill="#000"/>
<rect x="225" y="405" width="1" height="1" fill="#000"/>
<rect x="226" y="405" width="1" height="1" fill="#000"/>
<rect x="227" y="405" width="1" height="1" fill="#000"/>
<rect x="221" y="406" width="1" height="1" fill="#000"/>
<rect x="222" y="406" width="1" height="1" fill="#000"/>
<rect x="224" y="406" width="1" height="1" fill="#000"/>
<rect x="225" y="406" width="1" height="1" fill="#000"/>
<rect x="226" y="406" width="1" height="1" fill="#000"/>
<rect x="221" y="407" width="1" height="1" fill="#000"/>
<rect x="222" y="407" width="1" height="1" fill="#000"/>
<rect x="223" y="407" width="1" height="1" fill="#000"/>
<rect x="224" y="407" width="1" height="1" fill="#000"/>
<rect x="225" y="407" width="1" height="1" fill="#000"/>
<rect x="222" y="408" width="1" height="1" fill="#000"/>
<rect x="223" y="408" width="1" height="1" fill="#000"/>
<rect x="224" y="408" width="1" height="1" fill="#000"/>
<rect x="223" y="409" width="1" height="1" fill="#000"/>
<text x="234" y="410" font-size="11" font-weight="normal" fill="#000" stroke="#000" text-anchor="start" textLength="21.04" lengthAdjust="spacingAndGlyphs">55,3</text>
<text x="265.5" y="410" font-size="11" font-weight="normal" fill="#000" stroke="#000" text-anchor="start" textLength="27.22" lengthAdjust="spacingAndGlyphs">633,3</text>
<rect x="219" y="416" width="11" height="11" fill="#FFFFFF"/>
<rect x="219.5" y="416.5" width="10" height="10" fill="none" stroke="#8E8F8F"/>
<rect x="227" y="418" width="1" height="1" fill="#000"/>
<rect x="226" y="419" width="1" height="1" fill="#000"/>
<rect x="227" y="419" width="1" height="1" fill="#000"/>
<rect x="221" y="420" width="1" height="1" fill="#000"/>
<rect x="225" y="420" width="1" height="1" fill="#000"/>
<rect x="226" y="420" width="1" height="1" fill="#000"/>
<rect x="227" y="420" width="1" height="1" fill="#000"/>
<rect x="221" y="421" width="1" height="1" fill="#000"/>
<rect x="222" y="421" width="1" height="1" fill="#000"/>
<rect x="224" y="421" width="1" height="1" fill="#000"/>
<rect x="225" y="421" width="1" height="1" fill="#000"/>
<rect x="226" y="421" width="1" height="1" fill="#000"/>
<rect x="221" y="422" width="1" height="1" fill="#000"/>
<rect x="222" y="422" width="1" height="1" fill="#000"/>
<rect x="223" y="422" width="1" height="1" fill="#000"/>
<rect x="224" y="422" width="1" height="1" fill="#000"/>
<rect x="225" y="422" width="1" height="1" fill="#000"/>
<rect x="222" y="423" width="1" height="1" fill="#000"/>
<rect x="223" y="423" width="1" height="1" fill="#000"/>
<rect x="224" y="423" width="1" height="1" fill="#000"/>
<rect x="223" y="424" width="1" height="1" fill="#000"/>
<text x="234" y="425" font-size="11" font-weight="normal" fill="#000" stroke="#000" text-anchor="start" textLength="21.04" lengthAdjust="spacingAndGlyphs">52,7</text>
<text x="265.5" y="425" font-size="11" font-weight="normal" fill="#000" stroke="#000" text-anchor="start" textLength="27.22" lengthAdjust="spacingAndGlyphs">457,7</text>
<rect x="219" y="431" width="11" height="11" fill="#FFFFFF"/>
<rect x="219.5" y="431.5" width="10" height="10" fill="none" stroke="#8E8F8F"/>
<rect x="227" y="433" width="1" height="1" fill="#000"/>
<rect x="226" y="434" width="1" height="1" fill="#000"/>
<rect x="227" y="434" width="1" height="1" fill="#000"/>
<rect x="221" y="435" width="1" height="1" fill="#000"/>
<rect x="225" y="435" width="1" height="1" fill="#000"/>
<rect x="226" y="435" width="1" height="1" fill="#000"/>
<rect x="227" y="435" width="1" height="1" fill="#000"/>
<rect x="221" y="436" width="1" height="1" fill="#000"/>
<rect x="222" y="436" width="1" height="1" fill="#000"/>
<rect x="224" y="436" width="1" height="1" fill="#000"/>
<rect x="225" y="436" width="1" height="1" fill="#000"/>
<rect x="226" y="436" width="1" height="1" fill="#000"/>
<rect x="221" y="437" width="1" height="1" fill="#000"/>
<rect x="222" y="437" width="1" height="1" fill="#000"/>
<rect x="223" y="437" width="1" height="1" fill="#000"/>
<rect x="224" y="437" width="1" height="1" fill="#000"/>
<rect x="225" y="437" width="1" height="1" fill="#000"/>
<rect x="222" y="438" width="1" height="1" fill="#000"/>
<rect x="223" y="438" width="1" height="1" fill="#000"/>
<rect x="224" y="438" width="1" height="1" fill="#000"/>
<rect x="223" y="439" width="1" height="1" fill="#000"/>
<text x="234" y="440" font-size="11" font-weight="normal" fill="#000" stroke="#000" text-anchor="start" textLength="21.04" lengthAdjust="spacingAndGlyphs">31,9</text>
<text x="265.5" y="440" font-size="11" font-weight="normal" fill="#000" stroke="#000" text-anchor="start" textLength="27.22" lengthAdjust="spacingAndGlyphs">160,1</text>
<rect x="219" y="446" width="11" height="11" fill="#FFFFFF"/>
<rect x="219.5" y="446.5" width="10" height="10" fill="none" stroke="#8E8F8F"/>
<rect x="227" y="448" width="1" height="1" fill="#000"/>
<rect x="226" y="449" width="1" height="1" fill="#000"/>
<rect x="227" y="449" width="1" height="1" fill="#000"/>
<rect x="221" y="450" width="1" height="1" fill="#000"/>
<rect x="225" y="450" width="1" height="1" fill="#000"/>
<rect x="226" y="450" width="1" height="1" fill="#000"/>
<rect x="227" y="450" width="1" height="1" fill="#000"/>
<rect x="221" y="451" width="1" height="1" fill="#000"/>
<rect x="222" y="451" width="1" height="1" fill="#000"/>
<rect x="224" y="451" width="1" height="1" fill="#000"/>
<rect x="225" y="451" width="1" height="1" fill="#000"/>
<rect x="226" y="451" width="1" height="1" fill="#000"/>
<rect x="221" y="452" width="1" height="1" fill="#000"/>
<rect x="222" y="452" width="1" height="1" fill="#000"/>
<rect x="223" y="452" width="1" height="1" fill="#000"/>
<rect x="224" y="452" width="1" height="1" fill="#000"/>
<rect x="225" y="452" width="1" height="1" fill="#000"/>
<rect x="222" y="453" width="1" height="1" fill="#000"/>
<rect x="223" y="453" width="1" height="1" fill="#000"/>
<rect x="224" y="453" width="1" height="1" fill="#000"/>
<rect x="223" y="454" width="1" height="1" fill="#000"/>
<text x="234" y="455" font-size="11" font-weight="normal" fill="#000" stroke="#000" text-anchor="start" textLength="21.04" lengthAdjust="spacingAndGlyphs">31,3</text>
<text x="265.5" y="455" font-size="11" font-weight="normal" fill="#000" stroke="#000" text-anchor="start" textLength="21.04" lengthAdjust="spacingAndGlyphs">95,2</text>
<rect x="219" y="461" width="11" height="11" fill="#FFFFFF"/>
<rect x="219.5" y="461.5" width="10" height="10" fill="none" stroke="#8E8F8F"/>
<rect x="227" y="463" width="1" height="1" fill="#000"/>
<rect x="226" y="464" width="1" height="1" fill="#000"/>
<rect x="227" y="464" width="1" height="1" fill="#000"/>
<rect x="221" y="465" width="1" height="1" fill="#000"/>
<rect x="225" y="465" width="1" height="1" fill="#000"/>
<rect x="226" y="465" width="1" height="1" fill="#000"/>
<rect x="227" y="465" width="1" height="1" fill="#000"/>
<rect x="221" y="466" width="1" height="1" fill="#000"/>
<rect x="222" y="466" width="1" height="1" fill="#000"/>
<rect x="224" y="466" width="1" height="1" fill="#000"/>
<rect x="225" y="466" width="1" height="1" fill="#000"/>
<rect x="226" y="466" width="1" height="1" fill="#000"/>
<rect x="221" y="467" width="1" height="1" fill="#000"/>
<rect x="222" y="467" width="1" height="1" fill="#000"/>
<rect x="223" y="467" width="1" height="1" fill="#000"/>
<rect x="224" y="467" width="1" height="1" fill="#000"/>
<rect x="225" y="467" width="1" height="1" fill="#000"/>
<rect x="222" y="468" width="1" height="1" fill="#000"/>
<rect x="223" y="468" width="1" height="1" fill="#000"/>
<rect x="224" y="468" width="1" height="1" fill="#000"/>
<rect x="223" y="469" width="1" height="1" fill="#000"/>
<text x="234" y="470" font-size="11" font-weight="normal" fill="#000" stroke="#000" text-anchor="start" textLength="21.04" lengthAdjust="spacingAndGlyphs">30,7</text>
<text x="265.5" y="470" font-size="11" font-weight="normal" fill="#000" stroke="#000" text-anchor="start" textLength="21.04" lengthAdjust="spacingAndGlyphs">79,5</text>
<rect x="219" y="476" width="11" height="11" fill="#FFFFFF"/>
<rect x="219.5" y="476.5" width="10" height="10" fill="none" stroke="#8E8F8F"/>
<rect x="227" y="478" width="1" height="1" fill="#000"/>
<rect x="226" y="479" width="1" height="1" fill="#000"/>
<rect x="227" y="479" width="1" height="1" fill="#000"/>
<rect x="221" y="480" width="1" height="1" fill="#000"/>
<rect x="225" y="480" width="1" height="1" fill="#000"/>
<rect x="226" y="480" width="1" height="1" fill="#000"/>
<rect x="227" y="480" width="1" height="1" fill="#000"/>
<rect x="221" y="481" width="1" height="1" fill="#000"/>
<rect x="222" y="481" width="1" height="1" fill="#000"/>
<rect x="224" y="481" width="1" height="1" fill="#000"/>
<rect x="225" y="481" width="1" height="1" fill="#000"/>
<rect x="226" y="481" width="1" height="1" fill="#000"/>
<rect x="221" y="482" width="1" height="1" fill="#000"/>
<rect x="222" y="482" width="1" height="1" fill="#000"/>
<rect x="223" y="482" width="1" height="1" fill="#000"/>
<rect x="224" y="482" width="1" height="1" fill="#000"/>
<rect x="225" y="482" width="1" height="1" fill="#000"/>
<rect x="222" y="483" width="1" height="1" fill="#000"/>
<rect x="223" y="483" width="1" height="1" fill="#000"/>
<rect x="224" y="483" width="1" height="1" fill="#000"/>
<rect x="223" y="484" width="1" height="1" fill="#000"/>
<text x="234" y="485" font-size="11" font-weight="normal" fill="#000" stroke="#000" text-anchor="start" textLength="21.04" lengthAdjust="spacingAndGlyphs">28,7</text>
<text x="265.5" y="485" font-size="11" font-weight="normal" fill="#000" stroke="#000" text-anchor="start" textLength="27.22" lengthAdjust="spacingAndGlyphs">239,9</text>
<rect x="219" y="491" width="11" height="11" fill="#FFFFFF"/>
<rect x="219.5" y="491.5" width="10" height="10" fill="none" stroke="#8E8F8F"/>
<rect x="227" y="493" width="1" height="1" fill="#000"/>
<rect x="226" y="494" width="1" height="1" fill="#000"/>
<rect x="227" y="494" width="1" height="1" fill="#000"/>
<rect x="221" y="495" width="1" height="1" fill="#000"/>
<rect x="225" y="495" width="1" height="1" fill="#000"/>
<rect x="226" y="495" width="1" height="1" fill="#000"/>
<rect x="227" y="495" width="1" height="1" fill="#000"/>
<rect x="221" y="496" width="1" height="1" fill="#000"/>
<rect x="222" y="496" width="1" height="1" fill="#000"/>
<rect x="224" y="496" width="1" height="1" fill="#000"/>
<rect x="225" y="496" width="1" height="1" fill="#000"/>
<rect x="226" y="496" width="1" height="1" fill="#000"/>
<rect x="221" y="497" width="1" height="1" fill="#000"/>
<rect x="222" y="497" width="1" height="1" fill="#000"/>
<rect x="223" y="497" width="1" height="1" fill="#000"/>
<rect x="224" y="497" width="1" height="1" fill="#000"/>
<rect x="225" y="497" width="1" height="1" fill="#000"/>
<rect x="222" y="498" width="1" height="1" fill="#000"/>
<rect x="223" y="498" width="1" height="1" fill="#000"/>
<rect x="224" y="498" width="1" height="1" fill="#000"/>
<rect x="223" y="499" width="1" height="1" fill="#000"/>
<text x="234" y="500" font-size="11" font-weight="normal" fill="#000" stroke="#000" text-anchor="start" textLength="21.04" lengthAdjust="spacingAndGlyphs">24,0</text>
<text x="265.5" y="500" font-size="11" font-weight="normal" fill="#000" stroke="#000" text-anchor="start" textLength="21.04" lengthAdjust="spacingAndGlyphs">68,3</text>
<rect x="232" y="504" width="112" height="16" fill="#3399FF"/>
<rect x="219" y="506" width="11" height="11" fill="#FFFFFF"/>
<rect x="219.5" y="506.5" width="10" height="10" fill="none" stroke="#8E8F8F"/>
<rect x="227" y="508" width="1" height="1" fill="#000"/>
<rect x="226" y="509" width="1" height="1" fill="#000"/>
<rect x="227" y="509" width="1" height="1" fill="#000"/>
<rect x="221" y="510" width="1" height="1" fill="#000"/>
<rect x="225" y="510" width="1" height="1" fill="#000"/>
<rect x="226" y="510" width="1" height="1" fill="#000"/>
<rect x="227" y="510" width="1" height="1" fill="#000"/>
<rect x="221" y="511" width="1" height="1" fill="#000"/>
<rect x="222" y="511" width="1" height="1" fill="#000"/>
<rect x="224" y="511" width="1" height="1" fill="#000"/>
<rect x="225" y="511" width="1" height="1" fill="#000"/>
<rect x="226" y="511" width="1" height="1" fill="#000"/>
<rect x="221" y="512" width="1" height="1" fill="#000"/>
<rect x="222" y="512" width="1" height="1" fill="#000"/>
<rect x="223" y="512" width="1" height="1" fill="#000"/>
<rect x="224" y="512" width="1" height="1" fill="#000"/>
<rect x="225" y="512" width="1" height="1" fill="#000"/>
<rect x="222" y="513" width="1" height="1" fill="#000"/>
<rect x="223" y="513" width="1" height="1" fill="#000"/>
<rect x="224" y="513" width="1" height="1" fill="#000"/>
<rect x="223" y="514" width="1" height="1" fill="#000"/>
<text x="234" y="515" font-size="11" font-weight="normal" fill="#FFFFFF" stroke="#FFFFFF" text-anchor="start" textLength="21.04" lengthAdjust="spacingAndGlyphs">22,7</text>
<text x="265.5" y="515" font-size="11" font-weight="normal" fill="#FFFFFF" stroke="#FFFFFF" text-anchor="start" textLength="27.22" lengthAdjust="spacingAndGlyphs">133,7</text>
<rect x="344" y="353" width="440" height="168" fill="#000000"/>
<rect x="490" y="511" width="1" height="6" fill="#F01010"/>
<rect x="491" y="508" width="1" height="9" fill="#F01010"/>
<rect x="492" y="511" width="1" height="6" fill="#F01010"/>
<rect x="493" y="512" width="1" height="5" fill="#F01010"/>
<rect x="494" y="510" width="1" height="7" fill="#F01010"/>
<rect x="495" y="513" width="1" height="4" fill="#F01010"/>
<rect x="496" y="502" width="1" height="15" fill="#F01010"/>
<rect x="497" y="504" width="1" height="13" fill="#F01010"/>
<rect x="498" y="507" width="1" height="10" fill="#F01010"/>
<rect x="499" y="509" width="1" height="8" fill="#F01010"/>
<rect x="500" y="504" width="1" height="13" fill="#F01010"/>
<rect x="501" y="505" width="1" height="12" fill="#F01010"/>
<rect x="502" y="512" width="1" height="5" fill="#F01010"/>
<rect x="503" y="513" width="1" height="4" fill="#F01010"/>
<rect x="504" y="503" width="1" height="14" fill="#F01010"/>
<rect x="505" y="509" width="1" height="8" fill="#F01010"/>
<rect x="506" y="504" width="1" height="13" fill="#F01010"/>
<rect x="507" y="510" width="1" height="7" fill="#F01010"/>
<rect x="508" y="506" width="1" height="11" fill="#F01010"/>
<rect x="509" y="505" width="1" height="12" fill="#F01010"/>
<rect x="510" y="511" width="1" height="6" fill="#F01010"/>
<rect x="511" y="507" width="1" height="10" fill="#F01010"/>
<rect x="512" y="507" width="1" height="10" fill="#F01010"/>
<rect x="513" y="507" width="1" height="10" fill="#F01010"/>
<rect x="514" y="506" width="1" height="11" fill="#F01010"/>
<rect x="515" y="512" width="1" height="5" fill="#F01010"/>
<rect x="516" y="506" width="1" height="11" fill="#F01010"/>
<rect x="517" y="505" width="1" height="12" fill="#F01010"/>
<rect x="518" y="512" width="1" height="5" fill="#F01010"/>
<rect x="519" y="507" width="1" height="10" fill="#F01010"/>
<rect x="520" y="512" width="1" height="5" fill="#F01010"/>
<rect x="521" y="505" width="1" height="12" fill="#F01010"/>
<rect x="522" y="511" width="1" height="6" fill="#F01010"/>
<rect x="523" y="508" width="1" height="9" fill="#F01010"/>
<rect x="524" y="506" width="1" height="11" fill="#F01010"/>
<rect x="525" y="508" width="1" height="9" fill="#F01010"/>
<rect x="526" y="506" width="1" height="11" fill="#F01010"/>
<rect x="527" y="511" width="1" height="6" fill="#F01010"/>
<rect x="528" y="511" width="1" height="6" fill="#F01010"/>
<rect x="529" y="510" width="1" height="7" fill="#F01010"/>
<rect x="530" y="505" width="1" height="12" fill="#F01010"/>
<rect x="531" y="510" width="1" height="7" fill="#F01010"/>
<rect x="532" y="510" width="1" height="7" fill="#F01010"/>
<rect x="533" y="505" width="1" height="12" fill="#F01010"/>
<rect x="534" y="511" width="1" height="6" fill="#F01010"/>
<rect x="535" y="510" width="1" height="7" fill="#F01010"/>
<rect x="536" y="500" width="1" height="17" fill="#F01010"/>
<rect x="537" y="505" width="1" height="12" fill="#F01010"/>
<rect x="538" y="511" width="1" height="6" fill="#F01010"/>
<rect x="539" y="510" width="1" height="7" fill="#F01010"/>
<rect x="540" y="509" width="1" height="8" fill="#F01010"/>
<rect x="541" y="504" width="1" height="13" fill="#F01010"/>
<rect x="542" y="507" width="1" height="10" fill="#F01010"/>
<rect x="543" y="510" width="1" height="7" fill="#F01010"/>
<rect x="544" y="505" width="1" height="12" fill="#F01010"/>
<rect x="545" y="510" width="1" height="7" fill="#F01010"/>
<rect x="546" y="503" width="1" height="14" fill="#F01010"/>
<rect x="547" y="510" width="1" height="7" fill="#F01010"/>
<rect x="548" y="505" width="1" height="12" fill="#F01010"/>
<rect x="549" y="508" width="1" height="9" fill="#F01010"/>
<rect x="550" y="511" width="1" height="6" fill="#F01010"/>
<rect x="551" y="510" width="1" height="7" fill="#F01010"/>
<rect x="552" y="510" width="1" height="7" fill="#F01010"/>
<rect x="553" y="507" width="1" height="10" fill="#F01010"/>
<rect x="554" y="510" width="1" height="7" fill="#F01010"/>
<rect x="555" y="511" width="1" height="6" fill="#F01010"/>
<rect x="556" y="507" width="1" height="10" fill="#F01010"/>
<rect x="557" y="500" width="1" height="17" fill="#F01010"/>
<rect x="558" y="504" width="1" height="13" fill="#F01010"/>
<rect x="559" y="511" width="1" height="6" fill="#F01010"/>
<rect x="560" y="502" width="1" height="15" fill="#F01010"/>
<rect x="561" y="510" width="1" height="7" fill="#F01010"/>
<rect x="562" y="507" width="1" height="10" fill="#F01010"/>
<rect x="563" y="509" width="1" height="8" fill="#F01010"/>
<rect x="564" y="504" width="1" height="13" fill="#F01010"/>
<rect x="565" y="506" width="1" height="11" fill="#F01010"/>
<rect x="566" y="503" width="1" height="14" fill="#F01010"/>
<rect x="567" y="512" width="1" height="5" fill="#F01010"/>
<rect x="568" y="506" width="1" height="11" fill="#F01010"/>
<rect x="569" y="512" width="1" height="5" fill="#F01010"/>
<rect x="570" y="508" width="1" height="9" fill="#F01010"/>
<rect x="571" y="509" width="1" height="8" fill="#F01010"/>
<rect x="572" y="511" width="1" height="6" fill="#F01010"/>
<rect x="573" y="506" width="1" height="11" fill="#F01010"/>
<rect x="574" y="502" width="1" height="15" fill="#F01010"/>
<rect x="575" y="506" width="1" height="11" fill="#F01010"/>
<rect x="576" y="509" width="1" height="8" fill="#F01010"/>
<rect x="577" y="505" width="1" height="12" fill="#F01010"/>
<rect x="578" y="509" width="1" height="8" fill="#F01010"/>
<rect x="579" y="506" width="1" height="11" fill="#F01010"/>
<rect x="580" y="508" width="1" height="9" fill="#F01010"/>
<rect x="581" y="508" width="1" height="9" fill="#F01010"/>
<rect x="582" y="505" width="1" height="12" fill="#F01010"/>
<rect x="583" y="505" width="1" height="12" fill="#F01010"/>
<rect x="584" y="507" width="1" height="10" fill="#F01010"/>
<rect x="585" y="507" width="1" height="10" fill="#F01010"/>
<rect x="586" y="509" width="1" height="8" fill="#F01010"/>
<rect x="587" y="512" width="1" height="5" fill="#F01010"/>
<rect x="588" y="512" width="1" height="5" fill="#F01010"/>
<rect x="589" y="509" width="1" height="8" fill="#F01010"/>
<rect x="590" y="503" width="1" height="14" fill="#F01010"/>
<rect x="591" y="508" width="1" height="9" fill="#F01010"/>
<rect x="592" y="507" width="1" height="10" fill="#F01010"/>
<rect x="593" y="511" width="1" height="6" fill="#F01010"/>
<rect x="594" y="511" width="1" height="6" fill="#F01010"/>
<rect x="595" y="507" width="1" height="10" fill="#F01010"/>
<rect x="596" y="510" width="1" height="7" fill="#F01010"/>
<rect x="597" y="511" width="1" height="6" fill="#F01010"/>
<rect x="598" y="504" width="1" height="13" fill="#F01010"/>
<rect x="599" y="508" width="1" height="9" fill="#F01010"/>
<rect x="600" y="507" width="1" height="10" fill="#F01010"/>
<rect x="601" y="509" width="1" height="8" fill="#F01010"/>
<rect x="602" y="512" width="1" height="5" fill="#F01010"/>
<rect x="603" y="508" width="1" height="9" fill="#F01010"/>
<rect x="604" y="506" width="1" height="11" fill="#F01010"/>
<rect x="605" y="511" width="1" height="6" fill="#F01010"/>
<rect x="606" y="510" width="1" height="7" fill="#F01010"/>
<rect x="607" y="512" width="1" height="5" fill="#F01010"/>
<rect x="608" y="509" width="1" height="8" fill="#F01010"/>
<rect x="609" y="511" width="1" height="6" fill="#F01010"/>
<rect x="610" y="507" width="1" height="10" fill="#F01010"/>
<rect x="611" y="510" width="1" height="7" fill="#F01010"/>
<rect x="612" y="503" width="1" height="14" fill="#F01010"/>
<rect x="613" y="509" width="1" height="8" fill="#F01010"/>
<rect x="614" y="511" width="1" height="6" fill="#F01010"/>
<rect x="615" y="513" width="1" height="4" fill="#F01010"/>
<rect x="616" y="507" width="1" height="10" fill="#F01010"/>
<rect x="617" y="503" width="1" height="14" fill="#F01010"/>
<rect x="618" y="510" width="1" height="7" fill="#F01010"/>
<rect x="619" y="510" width="1" height="7" fill="#F01010"/>
<rect x="620" y="510" width="1" height="7" fill="#F01010"/>
<rect x="621" y="509" width="1" height="8" fill="#F01010"/>
<rect x="622" y="508" width="1" height="9" fill="#F01010"/>
<rect x="623" y="511" width="1" height="6" fill="#F01010"/>
<rect x="624" y="513" width="1" height="4" fill="#F01010"/>
<rect x="625" y="510" width="1" height="7" fill="#F01010"/>
<rect x="626" y="512" width="1" height="5" fill="#F01010"/>
<rect x="627" y="510" width="1" height="7" fill="#F01010"/>
<rect x="628" y="510" width="1" height="7" fill="#F01010"/>
<rect x="629" y="512" width="1" height="5" fill="#F01010"/>
<rect x="630" y="509" width="1" height="8" fill="#F01010"/>
<rect x="631" y="509" width="1" height="8" fill="#F01010"/>
<rect x="632" y="513" width="1" height="4" fill="#F01010"/>
<rect x="633" y="510" width="1" height="7" fill="#F01010"/>
<rect x="634" y="512" width="1" height="5" fill="#F01010"/>
<rect x="635" y="509" width="1" height="8" fill="#F01010"/>
<rect x="636" y="509" width="1" height="8" fill="#F01010"/>
<rect x="637" y="511" width="1" height="6" fill="#F01010"/>
<rect x="638" y="510" width="1" height="7" fill="#F01010"/>
<rect x="639" y="511" width="1" height="6" fill="#F01010"/>
<rect x="640" y="513" width="1" height="4" fill="#F01010"/>
<rect x="641" y="509" width="1" height="8" fill="#F01010"/>
<rect x="642" y="511" width="1" height="6" fill="#F01010"/>
<rect x="643" y="512" width="1" height="5" fill="#F01010"/>
<rect x="644" y="510" width="1" height="7" fill="#F01010"/>
<rect x="645" y="514" width="1" height="3" fill="#F01010"/>
<rect x="646" y="512" width="1" height="5" fill="#F01010"/>
<rect x="647" y="509" width="1" height="8" fill="#F01010"/>
<rect x="648" y="507" width="1" height="10" fill="#F01010"/>
<rect x="649" y="511" width="1" height="6" fill="#F01010"/>
<rect x="650" y="513" width="1" height="4" fill="#F01010"/>
<rect x="651" y="514" width="1" height="3" fill="#F01010"/>
<rect x="652" y="512" width="1" height="5" fill="#F01010"/>
<rect x="653" y="511" width="1" height="6" fill="#F01010"/>
<rect x="654" y="511" width="1" height="6" fill="#F01010"/>
<rect x="655" y="511" width="1" height="6" fill="#F01010"/>
<rect x="656" y="514" width="1" height="3" fill="#F01010"/>
<rect x="657" y="514" width="1" height="3" fill="#F01010"/>
<rect x="658" y="512" width="1" height="5" fill="#F01010"/>
<rect x="659" y="512" width="1" height="5" fill="#F01010"/>
<rect x="660" y="514" width="1" height="3" fill="#F01010"/>
<rect x="661" y="512" width="1" height="5" fill="#F01010"/>
<rect x="662" y="514" width="1" height="3" fill="#F01010"/>
<rect x="663" y="512" width="1" height="5" fill="#F01010"/>
<rect x="664" y="513" width="1" height="4" fill="#F01010"/>
<rect x="665" y="513" width="1" height="4" fill="#F01010"/>
<rect x="666" y="511" width="1" height="6" fill="#F01010"/>
<rect x="667" y="512" width="1" height="5" fill="#F01010"/>
<rect x="668" y="505" width="1" height="12" fill="#F01010"/>
<rect x="669" y="514" width="1" height="3" fill="#F01010"/>
<rect x="670" y="511" width="1" height="6" fill="#F01010"/>
<rect x="671" y="514" width="1" height="3" fill="#F01010"/>
<rect x="672" y="502" width="1" height="15" fill="#F01010"/>
<rect x="673" y="515" width="1" height="2" fill="#F01010"/>
<rect x="674" y="515" width="1" height="2" fill="#F01010"/>
<rect x="675" y="513" width="1" height="4" fill="#F01010"/>
<rect x="676" y="509" width="1" height="8" fill="#F01010"/>
<rect x="677" y="515" width="1" height="2" fill="#F01010"/>
<rect x="678" y="513" width="1" height="4" fill="#F01010"/>
<rect x="679" y="511" width="1" height="6" fill="#F01010"/>
<rect x="680" y="515" width="1" height="2" fill="#F01010"/>
<rect x="681" y="514" width="1" height="3" fill="#F01010"/>
<rect x="682" y="514" width="1" height="3" fill="#F01010"/>
<rect x="683" y="515" width="1" height="2" fill="#F01010"/>
<rect x="684" y="515" width="1" height="2" fill="#F01010"/>
<rect x="685" y="515" width="1" height="2" fill="#F01010"/>
<rect x="686" y="514" width="1" height="3" fill="#F01010"/>
<rect x="687" y="515" width="1" height="2" fill="#F01010"/>
<rect x="688" y="514" width="1" height="3" fill="#F01010"/>
<rect x="689" y="515" width="1" height="2" fill="#F01010"/>
<rect x="690" y="514" width="1" height="3" fill="#F01010"/>
<rect x="691" y="514" width="1" height="3" fill="#F01010"/>
<rect x="692" y="514" width="1" height="3" fill="#F01010"/>
<rect x="693" y="514" width="1" height="3" fill="#F01010"/>
<rect x="694" y="514" width="1" height="3" fill="#F01010"/>
<rect x="695" y="515" width="1" height="2" fill="#F01010"/>
<rect x="696" y="515" width="1" height="2" fill="#F01010"/>
<rect x="697" y="514" width="1" height="3" fill="#F01010"/>
<rect x="698" y="515" width="1" height="2" fill="#F01010"/>
<rect x="699" y="515" width="1" height="2" fill="#F01010"/>
<rect x="700" y="514" width="1" height="3" fill="#F01010"/>
<rect x="701" y="514" width="1" height="3" fill="#F01010"/>
<rect x="702" y="515" width="1" height="2" fill="#F01010"/>
<rect x="703" y="516" width="1" height="1" fill="#F01010"/>
<rect x="704" y="514" width="1" height="3" fill="#F01010"/>
<rect x="705" y="514" width="1" height="3" fill="#F01010"/>
<rect x="706" y="515" width="1" height="2" fill="#F01010"/>
<rect x="707" y="515" width="1" height="2" fill="#F01010"/>
<rect x="708" y="514" width="1" height="3" fill="#F01010"/>
<rect x="709" y="515" width="1" height="2" fill="#F01010"/>
<rect x="710" y="515" width="1" height="2" fill="#F01010"/>
<rect x="711" y="515" width="1" height="2" fill="#F01010"/>
<rect x="712" y="515" width="1" height="2" fill="#F01010"/>
<rect x="713" y="514" width="1" height="3" fill="#F01010"/>
<rect x="714" y="514" width="1" height="3" fill="#F01010"/>
<rect x="715" y="516" width="1" height="1" fill="#F01010"/>
<rect x="716" y="515" width="1" height="2" fill="#F01010"/>
<rect x="717" y="515" width="1" height="2" fill="#F01010"/>
<rect x="718" y="515" width="1" height="2" fill="#F01010"/>
<rect x="719" y="514" width="1" height="3" fill="#F01010"/>
<rect x="720" y="515" width="1" height="2" fill="#F01010"/>
<rect x="721" y="516" width="1" height="1" fill="#F01010"/>
<rect x="722" y="515" width="1" height="2" fill="#F01010"/>
<rect x="723" y="516" width="1" height="1" fill="#F01010"/>
<rect x="724" y="514" width="1" height="3" fill="#F01010"/>
<rect x="725" y="515" width="1" height="2" fill="#F01010"/>
<rect x="726" y="515" width="1" height="2" fill="#F01010"/>
<rect x="727" y="515" width="1" height="2" fill="#F01010"/>
<rect x="728" y="515" width="1" height="2" fill="#F01010"/>
<rect x="729" y="515" width="1" height="2" fill="#F01010"/>
<rect x="730" y="516" width="1" height="1" fill="#F01010"/>
<rect x="731" y="515" width="1" height="2" fill="#F01010"/>
<rect x="732" y="515" width="1" height="2" fill="#F01010"/>
<rect x="733" y="515" width="1" height="2" fill="#F01010"/>
<rect x="734" y="515" width="1" height="2" fill="#F01010"/>
<rect x="735" y="515" width="1" height="2" fill="#F01010"/>
<rect x="736" y="514" width="1" height="3" fill="#F01010"/>
<rect x="737" y="516" width="1" height="1" fill="#F01010"/>
<rect x="738" y="516" width="1" height="1" fill="#F01010"/>
<rect x="739" y="515" width="1" height="2" fill="#F01010"/>
<rect x="740" y="516" width="1" height="1" fill="#F01010"/>
<rect x="741" y="515" width="1" height="2" fill="#F01010"/>
<rect x="742" y="515" width="1" height="2" fill="#F01010"/>
<rect x="743" y="516" width="1" height="1" fill="#F01010"/>
<rect x="744" y="515" width="1" height="2" fill="#F01010"/>
<rect x="745" y="515" width="1" height="2" fill="#F01010"/>
<rect x="746" y="514" width="1" height="3" fill="#F01010"/>
<rect x="747" y="516" width="1" height="1" fill="#F01010"/>
<rect x="748" y="516" width="1" height="1" fill="#F01010"/>
<rect x="749" y="516" width="1" height="1" fill="#F01010"/>
<rect x="750" y="516" width="1" height="1" fill="#F01010"/>
<rect x="751" y="516" width="1" height="1" fill="#F01010"/>
<rect x="345" y="505" width="1" height="12" fill="#F01010"/>
<rect x="477" y="502" width="1" height="15" fill="#F01010"/>
<rect x="379" y="482" width="1" height="35" fill="#3CF03C"/>
<rect x="399" y="448" width="1" height="69" fill="#3CF03C"/>
<rect x="413" y="425" width="1" height="92" fill="#3CF03C"/>
<rect x="423" y="430" width="1" height="87" fill="#3CF03C"/>
<rect x="432" y="460" width="1" height="57" fill="#3CF03C"/>
<rect x="440" y="487" width="1" height="30" fill="#3CF03C"/>
<rect x="446" y="469" width="1" height="48" fill="#3CF03C"/>
<rect x="452" y="451" width="1" height="66" fill="#3CF03C"/>
<rect x="457" y="445" width="1" height="72" fill="#3CF03C"/>
<rect x="462" y="444" width="1" height="73" fill="#3CF03C"/>
<rect x="466" y="435" width="1" height="82" fill="#3CF03C"/>
<rect x="470" y="430" width="1" height="87" fill="#3CF03C"/>
<rect x="474" y="451" width="1" height="66" fill="#3CF03C"/>
<rect x="480" y="473" width="1" height="44" fill="#3CF03C"/>
<rect x="483" y="436" width="1" height="81" fill="#3CF03C"/>
<rect x="486" y="433" width="1" height="84" fill="#3CF03C"/>
<rect x="488" y="460" width="1" height="57" fill="#3CF03C"/>
<rect x="491" y="491" width="1" height="17" fill="#3CF03C"/>
<rect x="491" y="508" width="1" height="9" fill="#B8B828"/>
<rect x="493" y="501" width="1" height="11" fill="#3CF03C"/>
<rect x="493" y="512" width="1" height="5" fill="#B8B828"/>
<rect x="502" y="497" width="1" height="15" fill="#3CF03C"/>
<rect x="502" y="512" width="1" height="5" fill="#B8B828"/>
<rect x="507" y="499" width="1" height="11" fill="#3CF03C"/>
<rect x="507" y="510" width="1" height="7" fill="#B8B828"/>
<rect x="512" y="501" width="1" height="6" fill="#3CF03C"/>
<rect x="512" y="507" width="1" height="10" fill="#B8B828"/>
<rect x="515" y="490" width="1" height="22" fill="#3CF03C"/>
<rect x="515" y="512" width="1" height="5" fill="#B8B828"/>
<rect x="517" y="472" width="1" height="45" fill="#3CF03C"/>
<rect x="518" y="472" width="1" height="45" fill="#3CF03C"/>
<rect x="520" y="494" width="1" height="18" fill="#3CF03C"/>
<rect x="520" y="512" width="1" height="5" fill="#B8B828"/>
<rect x="526" y="498" width="1" height="8" fill="#3CF03C"/>
<rect x="526" y="506" width="1" height="11" fill="#B8B828"/>
<rect x="533" y="487" width="1" height="30" fill="#3CF03C"/>
<rect x="534" y="487" width="1" height="30" fill="#3CF03C"/>
<rect x="537" y="467" width="1" height="50" fill="#3CF03C"/>
<rect x="538" y="467" width="1" height="50" fill="#3CF03C"/>
<rect x="539" y="467" width="1" height="50" fill="#3CF03C"/>
<rect x="540" y="493" width="1" height="16" fill="#3CF03C"/>
<rect x="540" y="509" width="1" height="8" fill="#B8B828"/>
<rect x="543" y="488" width="1" height="22" fill="#3CF03C"/>
<rect x="543" y="510" width="1" height="7" fill="#B8B828"/>
<rect x="545" y="481" width="1" height="29" fill="#3CF03C"/>
<rect x="545" y="510" width="1" height="7" fill="#B8B828"/>
<rect x="549" y="486" width="1" height="31" fill="#3CF03C"/>
<rect x="550" y="486" width="1" height="31" fill="#3CF03C"/>
<rect x="551" y="486" width="1" height="31" fill="#3CF03C"/>
<rect x="552" y="486" width="1" height="31" fill="#3CF03C"/>
<rect x="553" y="486" width="1" height="31" fill="#3CF03C"/>
<rect x="554" y="486" width="1" height="31" fill="#3CF03C"/>
<rect x="550" y="420" width="1" height="97" fill="#3CF03C"/>
<rect x="551" y="420" width="1" height="97" fill="#3CF03C"/>
<rect x="552" y="420" width="1" height="97" fill="#3CF03C"/>
<rect x="550" y="400" width="1" height="117" fill="#3CF03C"/>
<rect x="551" y="400" width="1" height="117" fill="#3CF03C"/>
<rect x="551" y="359" width="1" height="151" fill="#3CF03C"/>
<rect x="551" y="510" width="1" height="7" fill="#B8B828"/>
<rect x="554" y="487" width="1" height="23" fill="#3CF03C"/>
<rect x="554" y="510" width="1" height="7" fill="#B8B828"/>
<rect x="562" y="468" width="1" height="49" fill="#3CF03C"/>
<rect x="563" y="468" width="1" height="49" fill="#3CF03C"/>
<rect x="564" y="498" width="1" height="6" fill="#3CF03C"/>
<rect x="564" y="504" width="1" height="13" fill="#B8B828"/>
<rect x="571" y="469" width="1" height="48" fill="#3CF03C"/>
<rect x="572" y="469" width="1" height="48" fill="#3CF03C"/>
<rect x="578" y="479" width="1" height="30" fill="#3CF03C"/>
<rect x="578" y="509" width="1" height="8" fill="#B8B828"/>
<rect x="585" y="485" width="1" height="22" fill="#3CF03C"/>
<rect x="585" y="507" width="1" height="10" fill="#B8B828"/>
<rect x="591" y="490" width="1" height="18" fill="#3CF03C"/>
<rect x="591" y="508" width="1" height="9" fill="#B8B828"/>
<rect x="601" y="495" width="1" height="14" fill="#3CF03C"/>
<rect x="601" y="509" width="1" height="8" fill="#B8B828"/>
<rect x="608" y="490" width="1" height="19" fill="#3CF03C"/>
<rect x="608" y="509" width="1" height="8" fill="#B8B828"/>
<rect x="619" y="496" width="1" height="14" fill="#3CF03C"/>
<rect x="619" y="510" width="1" height="7" fill="#B8B828"/>
<rect x="484" y="354" width="1" height="167" fill="#FFFFFF"/>
<rect x="784" y="353" width="17" height="168" fill="#FFFFFF"/>
<rect x="784" y="353" width="1" height="168" fill="#A0A0A0"/>
<rect x="800" y="353" width="1" height="168" fill="#696969"/>
<rect x="784" y="353" width="17" height="16" fill="#F0F0F0"/>
<rect x="784" y="353" width="17" height="1" fill="#FFFFFF"/>
<rect x="784" y="353" width="1" height="16" fill="#FFFFFF"/>
<rect x="784" y="368" width="17" height="1" fill="#696969"/>
<rect x="800" y="353" width="1" height="16" fill="#696969"/>
<rect x="785" y="367" width="15" height="1" fill="#A0A0A0"/>
<rect x="799" y="354" width="1" height="14" fill="#A0A0A0"/>
<polygon points="789.5,363 796.5,363 793.0,359" fill="#000" shape-rendering="geometricPrecision"/>
<rect x="784" y="505" width="17" height="16" fill="#F0F0F0"/>
<rect x="784" y="505" width="17" height="1" fill="#FFFFFF"/>
<rect x="784" y="505" width="1" height="16" fill="#FFFFFF"/>
<rect x="784" y="520" width="17" height="1" fill="#696969"/>
<rect x="800" y="505" width="1" height="16" fill="#696969"/>
<rect x="785" y="519" width="15" height="1" fill="#A0A0A0"/>
<rect x="799" y="506" width="1" height="14" fill="#A0A0A0"/>
<polygon points="789.0,511.5 796.0,511.5 792.5,515.5" fill="#000" shape-rendering="geometricPrecision"/>
<rect x="784" y="369" width="17" height="9" fill="#F0F0F0"/>
<rect x="784" y="369" width="17" height="1" fill="#FFFFFF"/>
<rect x="784" y="369" width="1" height="9" fill="#FFFFFF"/>
<rect x="784" y="377" width="17" height="1" fill="#696969"/>
<rect x="800" y="369" width="1" height="9" fill="#696969"/>
<rect x="785" y="376" width="15" height="1" fill="#A0A0A0"/>
<rect x="799" y="370" width="1" height="7" fill="#A0A0A0"/>
<rect x="608" y="521" width="176" height="17" fill="#FFFFFF"/>
<rect x="608" y="521" width="176" height="1" fill="#A0A0A0"/>
<rect x="608" y="537" width="176" height="1" fill="#696969"/>
<rect x="608" y="521" width="17" height="17" fill="#F0F0F0"/>
<rect x="608" y="521" width="17" height="1" fill="#FFFFFF"/>
<rect x="608" y="521" width="1" height="17" fill="#FFFFFF"/>
<rect x="608" y="537" width="17" height="1" fill="#696969"/>
<rect x="624" y="521" width="1" height="17" fill="#696969"/>
<rect x="609" y="536" width="15" height="1" fill="#A0A0A0"/>
<rect x="623" y="522" width="1" height="15" fill="#A0A0A0"/>
<polygon points="617,526.1 617,533.1 613,529.6" fill="#000" shape-rendering="geometricPrecision"/>
<rect x="767" y="521" width="17" height="17" fill="#F0F0F0"/>
<rect x="767" y="521" width="17" height="1" fill="#FFFFFF"/>
<rect x="767" y="521" width="1" height="17" fill="#FFFFFF"/>
<rect x="767" y="537" width="17" height="1" fill="#696969"/>
<rect x="783" y="521" width="1" height="17" fill="#696969"/>
<rect x="768" y="536" width="15" height="1" fill="#A0A0A0"/>
<rect x="782" y="522" width="1" height="15" fill="#A0A0A0"/>
<polygon points="774.5,526.1 774.5,533.1 778.5,529.6" fill="#000" shape-rendering="geometricPrecision"/>
<rect x="624" y="521" width="9" height="17" fill="#F0F0F0"/>
<rect x="624" y="521" width="9" height="1" fill="#FFFFFF"/>
<rect x="624" y="521" width="1" height="17" fill="#FFFFFF"/>
<rect x="624" y="537" width="9" height="1" fill="#696969"/>
<rect x="632" y="521" width="1" height="17" fill="#696969"/>
<rect x="625" y="536" width="7" height="1" fill="#A0A0A0"/>
<rect x="631" y="522" width="1" height="15" fill="#A0A0A0"/>
<text x="352.6" y="532" font-size="11" font-weight="normal" fill="#000" stroke="#000" text-anchor="start" textLength="108.6" lengthAdjust="spacingAndGlyphs">Cursor: Period=472,3 S</text>
<rect x="224" y="561" width="121" height="33" fill="#F0F0F0"/>
<rect x="224" y="561" width="121" height="1" fill="#FFFFFF"/>
<rect x="224" y="561" width="1" height="33" fill="#FFFFFF"/>
<rect x="224" y="593" width="121" height="1" fill="#696969"/>
<rect x="344" y="561" width="1" height="33" fill="#696969"/>
<rect x="225" y="592" width="119" height="1" fill="#A0A0A0"/>
<rect x="343" y="562" width="1" height="31" fill="#A0A0A0"/>
<text x="284.5" y="581" font-size="11" font-weight="normal" fill="#000" stroke="#000" text-anchor="middle" textLength="50" lengthAdjust="spacingAndGlyphs">Auto Filter</text>
<text x="368.5" y="556" font-size="11" font-weight="normal" fill="#000" stroke="#000" text-anchor="start" textLength="41.28" lengthAdjust="spacingAndGlyphs">MagLimit</text>
<text x="496.5" y="556" font-size="11" font-weight="normal" fill="#000" stroke="#000" text-anchor="end" textLength="12.36" lengthAdjust="spacingAndGlyphs">10</text>
<rect x="368" y="561" width="129" height="16" fill="#FFFFFF"/>
<rect x="368" y="561" width="129" height="1" fill="#A0A0A0"/>
<rect x="368" y="576" width="129" height="1" fill="#696969"/>
<rect x="368" y="561" width="17" height="16" fill="#F0F0F0"/>
<rect x="368" y="561" width="17" height="1" fill="#FFFFFF"/>
<rect x="368" y="561" width="1" height="16" fill="#FFFFFF"/>
<rect x="368" y="576" width="17" height="1" fill="#696969"/>
<rect x="384" y="561" width="1" height="16" fill="#696969"/>
<rect x="369" y="575" width="15" height="1" fill="#A0A0A0"/>
<rect x="383" y="562" width="1" height="14" fill="#A0A0A0"/>
<polygon points="377,565.6 377,572.6 373,569.1" fill="#000" shape-rendering="geometricPrecision"/>
<rect x="480" y="561" width="17" height="16" fill="#F0F0F0"/>
<rect x="480" y="561" width="17" height="1" fill="#FFFFFF"/>
<rect x="480" y="561" width="1" height="16" fill="#FFFFFF"/>
<rect x="480" y="576" width="17" height="1" fill="#696969"/>
<rect x="496" y="561" width="1" height="16" fill="#696969"/>
<rect x="481" y="575" width="15" height="1" fill="#A0A0A0"/>
<rect x="495" y="562" width="1" height="14" fill="#A0A0A0"/>
<polygon points="487.5,565.6 487.5,572.6 491.5,569.1" fill="#000" shape-rendering="geometricPrecision"/>
<rect x="394" y="561" width="8" height="16" fill="#F0F0F0"/>
<rect x="394" y="561" width="8" height="1" fill="#FFFFFF"/>
<rect x="394" y="561" width="1" height="16" fill="#FFFFFF"/>
<rect x="394" y="576" width="8" height="1" fill="#696969"/>
<rect x="401" y="561" width="1" height="16" fill="#696969"/>
<rect x="395" y="575" width="6" height="1" fill="#A0A0A0"/>
<rect x="400" y="562" width="1" height="14" fill="#A0A0A0"/>
<rect x="368" y="577" width="57" height="17" fill="#F0F0F0"/>
<rect x="368" y="577" width="57" height="1" fill="#FFFFFF"/>
<rect x="368" y="577" width="1" height="17" fill="#FFFFFF"/>
<rect x="368" y="593" width="57" height="1" fill="#696969"/>
<rect x="424" y="577" width="1" height="17" fill="#696969"/>
<rect x="369" y="592" width="55" height="1" fill="#A0A0A0"/>
<rect x="423" y="578" width="1" height="15" fill="#A0A0A0"/>
<text x="396.5" y="589" font-size="11" font-weight="normal" fill="#000" stroke="#000" text-anchor="middle" textLength="26.89" lengthAdjust="spacingAndGlyphs">Reset</text>
<rect x="440" y="577" width="57" height="17" fill="#F0F0F0"/>
<rect x="440" y="577" width="57" height="1" fill="#FFFFFF"/>
<rect x="440" y="577" width="1" height="17" fill="#FFFFFF"/>
<rect x="440" y="593" width="57" height="1" fill="#696969"/>
<rect x="496" y="577" width="1" height="17" fill="#696969"/>
<rect x="441" y="592" width="55" height="1" fill="#A0A0A0"/>
<rect x="495" y="578" width="1" height="15" fill="#A0A0A0"/>
<text x="468.5" y="589" font-size="11" font-weight="normal" fill="#000" stroke="#000" text-anchor="middle" textLength="15.01" lengthAdjust="spacingAndGlyphs">Set</text>
<text x="520.5" y="556" font-size="11" font-weight="normal" fill="#000" stroke="#000" text-anchor="start" textLength="43.69" lengthAdjust="spacingAndGlyphs">HighPass</text>
<text x="648.5" y="556" font-size="11" font-weight="normal" fill="#000" stroke="#000" text-anchor="end" textLength="24.5" lengthAdjust="spacingAndGlyphs">None</text>
<rect x="520" y="561" width="129" height="16" fill="#FFFFFF"/>
<rect x="520" y="561" width="129" height="1" fill="#A0A0A0"/>
<rect x="520" y="576" width="129" height="1" fill="#696969"/>
<rect x="520" y="561" width="17" height="16" fill="#F0F0F0"/>
<rect x="520" y="561" width="17" height="1" fill="#FFFFFF"/>
<rect x="520" y="561" width="1" height="16" fill="#FFFFFF"/>
<rect x="520" y="576" width="17" height="1" fill="#696969"/>
<rect x="536" y="561" width="1" height="16" fill="#696969"/>
<rect x="521" y="575" width="15" height="1" fill="#A0A0A0"/>
<rect x="535" y="562" width="1" height="14" fill="#A0A0A0"/>
<polygon points="529,565.6 529,572.6 525,569.1" fill="#000" shape-rendering="geometricPrecision"/>
<rect x="632" y="561" width="17" height="16" fill="#F0F0F0"/>
<rect x="632" y="561" width="17" height="1" fill="#FFFFFF"/>
<rect x="632" y="561" width="1" height="16" fill="#FFFFFF"/>
<rect x="632" y="576" width="17" height="1" fill="#696969"/>
<rect x="648" y="561" width="1" height="16" fill="#696969"/>
<rect x="633" y="575" width="15" height="1" fill="#A0A0A0"/>
<rect x="647" y="562" width="1" height="14" fill="#A0A0A0"/>
<polygon points="639.5,565.6 639.5,572.6 643.5,569.1" fill="#000" shape-rendering="geometricPrecision"/>
<rect x="537" y="561" width="7" height="16" fill="#F0F0F0"/>
<rect x="537" y="561" width="7" height="1" fill="#FFFFFF"/>
<rect x="537" y="561" width="1" height="16" fill="#FFFFFF"/>
<rect x="537" y="576" width="7" height="1" fill="#696969"/>
<rect x="543" y="561" width="1" height="16" fill="#696969"/>
<rect x="538" y="575" width="5" height="1" fill="#A0A0A0"/>
<rect x="542" y="562" width="1" height="14" fill="#A0A0A0"/>
<rect x="520" y="577" width="57" height="17" fill="#F0F0F0"/>
<rect x="520" y="577" width="57" height="1" fill="#FFFFFF"/>
<rect x="520" y="577" width="1" height="17" fill="#FFFFFF"/>
<rect x="520" y="593" width="57" height="1" fill="#696969"/>
<rect x="576" y="577" width="1" height="17" fill="#696969"/>
<rect x="521" y="592" width="55" height="1" fill="#A0A0A0"/>
<rect x="575" y="578" width="1" height="15" fill="#A0A0A0"/>
<text x="548.5" y="589" font-size="11" font-weight="normal" fill="#000" stroke="#000" text-anchor="middle" textLength="26.89" lengthAdjust="spacingAndGlyphs">Reset</text>
<rect x="592" y="577" width="57" height="17" fill="#F0F0F0"/>
<rect x="592" y="577" width="57" height="1" fill="#FFFFFF"/>
<rect x="592" y="577" width="1" height="17" fill="#FFFFFF"/>
<rect x="592" y="593" width="57" height="1" fill="#696969"/>
<rect x="648" y="577" width="1" height="17" fill="#696969"/>
<rect x="593" y="592" width="55" height="1" fill="#A0A0A0"/>
<rect x="647" y="578" width="1" height="15" fill="#A0A0A0"/>
<text x="620.5" y="589" font-size="11" font-weight="normal" fill="#000" stroke="#000" text-anchor="middle" textLength="15.01" lengthAdjust="spacingAndGlyphs">Set</text>
<text x="672.5" y="556" font-size="11" font-weight="normal" fill="#000" stroke="#000" text-anchor="start" textLength="41.59" lengthAdjust="spacingAndGlyphs">LowPass</text>
<text x="800.5" y="556" font-size="11" font-weight="normal" fill="#000" stroke="#000" text-anchor="end" textLength="24.5" lengthAdjust="spacingAndGlyphs">None</text>
<rect x="672" y="561" width="129" height="16" fill="#FFFFFF"/>
<rect x="672" y="561" width="129" height="1" fill="#A0A0A0"/>
<rect x="672" y="576" width="129" height="1" fill="#696969"/>
<rect x="672" y="561" width="17" height="16" fill="#F0F0F0"/>
<rect x="672" y="561" width="17" height="1" fill="#FFFFFF"/>
<rect x="672" y="561" width="1" height="16" fill="#FFFFFF"/>
<rect x="672" y="576" width="17" height="1" fill="#696969"/>
<rect x="688" y="561" width="1" height="16" fill="#696969"/>
<rect x="673" y="575" width="15" height="1" fill="#A0A0A0"/>
<rect x="687" y="562" width="1" height="14" fill="#A0A0A0"/>
<polygon points="681,565.6 681,572.6 677,569.1" fill="#000" shape-rendering="geometricPrecision"/>
<rect x="784" y="561" width="17" height="16" fill="#F0F0F0"/>
<rect x="784" y="561" width="17" height="1" fill="#FFFFFF"/>
<rect x="784" y="561" width="1" height="16" fill="#FFFFFF"/>
<rect x="784" y="576" width="17" height="1" fill="#696969"/>
<rect x="800" y="561" width="1" height="16" fill="#696969"/>
<rect x="785" y="575" width="15" height="1" fill="#A0A0A0"/>
<rect x="799" y="562" width="1" height="14" fill="#A0A0A0"/>
<polygon points="791.5,565.6 791.5,572.6 795.5,569.1" fill="#000" shape-rendering="geometricPrecision"/>
<rect x="777" y="561" width="7" height="16" fill="#F0F0F0"/>
<rect x="777" y="561" width="7" height="1" fill="#FFFFFF"/>
<rect x="777" y="561" width="1" height="16" fill="#FFFFFF"/>
<rect x="777" y="576" width="7" height="1" fill="#696969"/>
<rect x="783" y="561" width="1" height="16" fill="#696969"/>
<rect x="778" y="575" width="5" height="1" fill="#A0A0A0"/>
<rect x="782" y="562" width="1" height="14" fill="#A0A0A0"/>
<rect x="672" y="577" width="57" height="17" fill="#F0F0F0"/>
<rect x="672" y="577" width="57" height="1" fill="#FFFFFF"/>
<rect x="672" y="577" width="1" height="17" fill="#FFFFFF"/>
<rect x="672" y="593" width="57" height="1" fill="#696969"/>
<rect x="728" y="577" width="1" height="17" fill="#696969"/>
<rect x="673" y="592" width="55" height="1" fill="#A0A0A0"/>
<rect x="727" y="578" width="1" height="15" fill="#A0A0A0"/>
<text x="700.5" y="589" font-size="11" font-weight="normal" fill="#000" stroke="#000" text-anchor="middle" textLength="26.89" lengthAdjust="spacingAndGlyphs">Reset</text>
<rect x="744" y="577" width="57" height="17" fill="#F0F0F0"/>
<rect x="744" y="577" width="57" height="1" fill="#FFFFFF"/>
<rect x="744" y="577" width="1" height="17" fill="#FFFFFF"/>
<rect x="744" y="593" width="57" height="1" fill="#696969"/>
<rect x="800" y="577" width="1" height="17" fill="#696969"/>
<rect x="745" y="592" width="55" height="1" fill="#A0A0A0"/>
<rect x="799" y="578" width="1" height="15" fill="#A0A0A0"/>
<text x="772.5" y="589" font-size="11" font-weight="normal" fill="#000" stroke="#000" text-anchor="middle" textLength="15.01" lengthAdjust="spacingAndGlyphs">Set</text>
</svg></body></html>
